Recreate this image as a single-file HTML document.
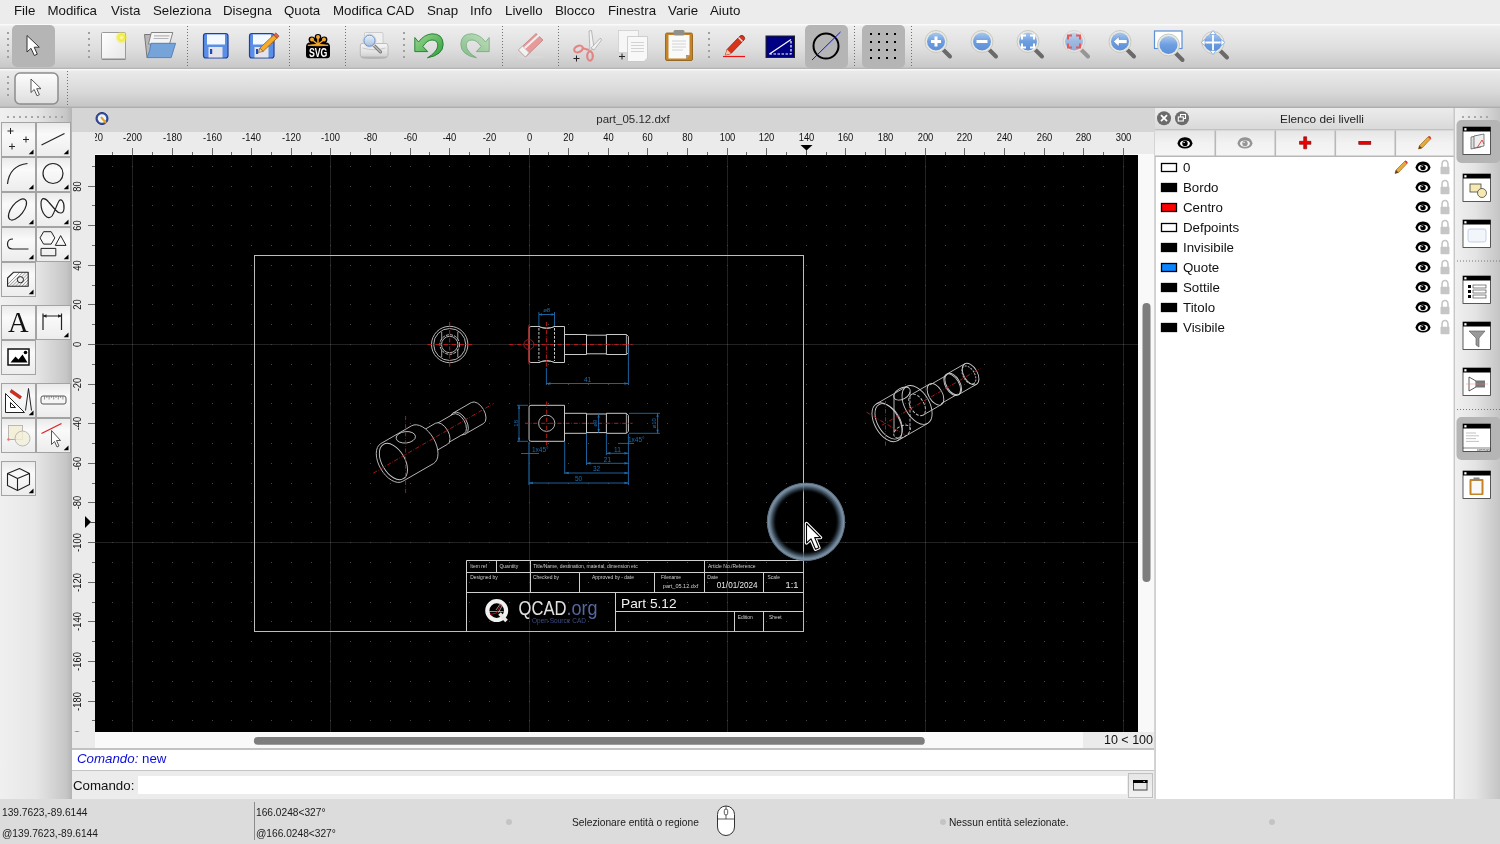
<!DOCTYPE html>
<html><head><meta charset="utf-8">
<style>
*{margin:0;padding:0;box-sizing:border-box}
html,body{width:1500px;height:844px;overflow:hidden;background:#ececec;will-change:transform;font-family:"Liberation Sans",sans-serif;color:#222;position:relative}
.a{position:absolute}
svg.a{overflow:visible}
#menubar{left:0;top:0;width:1500px;height:24px;background:#ececec}
#menubar span{position:absolute;top:2.8px;font-size:13.3px;color:#141414;white-space:nowrap}
#tb1{left:0;top:24px;width:1500px;height:45px;background:linear-gradient(#fafafa 0,#fafafa 1px,#eeeeee 2px,#dedede 55%,#c9c9c9 95%,#b0b0b0 100%)}
#tb2{left:0;top:69px;width:1500px;height:39px;background:linear-gradient(#f8f8f8 0,#f8f8f8 1px,#eaeaea 2px,#d8d8d8 60%,#c6c6c6 94%,#a8a8a8 100%)}
#toolbox{left:0;top:108px;width:72px;height:691px;background:linear-gradient(90deg,#f0f0f0 0,#e6e6e6 50%,#c6c6c6 92%,#b4b4b4 100%)}
#mdi{left:72px;top:108px;width:1083px;height:691px;background:#ececec}
#mdititle{left:72px;top:108px;width:1082px;height:24px;background:#d5d5d5}
#rulertop{left:72px;top:132px;width:1082px;height:23px;background:#ebebeb}
#rulerleft{left:72px;top:155px;width:23px;height:593px;background:#ebebeb}
#canvas{left:95px;top:155px;width:1043px;height:577px;background:#000}
#vscroll{left:1138px;top:155px;width:16px;height:593px;background:#f9f9f9}
#hscroll{left:95px;top:732px;width:1043px;height:16px;background:#f9f9f9}
#zoomlbl{left:1083px;top:732px;width:71px;height:16px;background:#ebebeb;font-size:12.5px;color:#111;text-align:right;line-height:16px;padding-right:1px}
#cmdhist{left:72px;top:748px;width:1082px;height:23px;background:#fff;border-top:2px solid #c2c2c2;border-bottom:1px solid #c4c4c4}
#cmdrow{left:72px;top:771px;width:1082px;height:28px;background:#ececec}
#cmdin{left:138px;top:776px;width:989px;height:18px;background:#fff}
#cmdbtn{left:1127.5px;top:772.5px;width:25px;height:25px;background:linear-gradient(#e6e6e6,#f2f2f2);border:1px solid #c0c0c0}
#status{left:0;top:799px;width:1500px;height:45px;background:#dcdcdc}
.st{position:absolute;font-size:10.2px;color:#1a1a1a;white-space:nowrap}
#layerbg{left:1154px;top:108px;width:301px;height:691px;background:#d4d4d4}
</style></head>
<body><div id="menubar" class="a">
<span style="left:14px">File</span>
<span style="left:47.5px">Modifica</span>
<span style="left:111px">Vista</span>
<span style="left:153px">Seleziona</span>
<span style="left:223px">Disegna</span>
<span style="left:284px">Quota</span>
<span style="left:333px">Modifica CAD</span>
<span style="left:427px">Snap</span>
<span style="left:470px">Info</span>
<span style="left:505px">Livello</span>
<span style="left:555px">Blocco</span>
<span style="left:608px">Finestra</span>
<span style="left:668px">Varie</span>
<span style="left:710px">Aiuto</span>
</div>
<div id="tb1" class="a"></div>
<div id="tb2" class="a"></div>
<div id="toolbox" class="a"></div>
<div id="mdi" class="a"></div>
<div id="mdititle" class="a"></div>
<div id="rulertop" class="a"></div>
<div id="rulerleft" class="a"></div>
<div id="canvas" class="a"></div>
<div id="vscroll" class="a"></div>
<div id="hscroll" class="a"></div>
<div id="zoomlbl" class="a">10 &lt; 100</div>
<div id="cmdhist" class="a"><span class="a" style="left:5px;top:0.5px;font-size:13.3px;color:#0e0ed8;white-space:nowrap"><i>Comando:</i> new</span></div>
<div id="cmdrow" class="a"><span class="a" style="left:1px;top:6.8px;font-size:13.3px;color:#111;white-space:nowrap">Comando:</span></div>
<div id="cmdin" class="a"></div>
<div id="cmdbtn" class="a"><svg class="a" style="left:4.5px;top:6.5px" width="15" height="11"><rect x="0.5" y="0.5" width="13.5" height="9.5" fill="#e8e8e8" stroke="#444" stroke-width="1"/><rect x="0" y="0" width="14.5" height="3" fill="#000"/><rect x="10.5" y="1" width="1.2" height="1" fill="#fff"/></svg></div>
<div id="status" class="a">
<span class="st" style="left:2px;top:8px">139.7623,-89.6144</span>
<span class="st" style="left:2px;top:28.8px">@139.7623,-89.6144</span>
<div class="a" style="left:254px;top:3px;width:1px;height:38px;background:#8c8c8c"></div>
<span class="st" style="left:256px;top:8px">166.0248&lt;327°</span>
<span class="st" style="left:256px;top:28.8px">@166.0248&lt;327°</span>
<div class="a" style="left:506px;top:19.5px;width:6px;height:6px;border-radius:3px;background:#c4c4c4"></div>
<span class="st" style="left:572px;top:18px">Selezionare entità o regione</span>
<svg class="a" style="left:716px;top:6px" width="21" height="32"><rect x="1.5" y="1" width="17" height="29.5" rx="8.5" fill="#fff" stroke="#333" stroke-width="1"/><path d="M1.5,14 H18.5" stroke="#333" stroke-width="0.8"/><path d="M10,1 V14" stroke="#333" stroke-width="0.8"/><rect x="8.3" y="4" width="3.4" height="6" rx="1.7" fill="#fff" stroke="#333" stroke-width="0.8"/></svg>
<div class="a" style="left:940px;top:19.5px;width:6px;height:6px;border-radius:3px;background:#c4c4c4"></div>
<span class="st" style="left:949px;top:18px">Nessun entità selezionate.</span>
<div class="a" style="left:1269px;top:19.5px;width:6px;height:6px;border-radius:3px;background:#c4c4c4"></div>
</div>
<div id="layerbg" class="a"></div>
<svg class="a" style="left:0;top:0" width="1500" height="110" viewBox="0 0 1500 110">
<defs>
<linearGradient id="gBlue" x1="0" y1="0" x2="0" y2="1"><stop offset="0" stop-color="#a9c8ef"/><stop offset="0.5" stop-color="#6d9ee0"/><stop offset="1" stop-color="#5b8fd8"/></linearGradient>
<linearGradient id="gBtn" x1="0" y1="0" x2="0" y2="1"><stop offset="0" stop-color="#fdfdfd"/><stop offset="1" stop-color="#dedede"/></linearGradient>
<linearGradient id="gPage" x1="0" y1="0" x2="1" y2="1"><stop offset="0" stop-color="#ffffff"/><stop offset="1" stop-color="#e6e6e6"/></linearGradient>
<radialGradient id="gGlow"><stop offset="0" stop-color="#ffffc0"/><stop offset="0.45" stop-color="#f2ea3a"/><stop offset="1" stop-color="#f2ea3a" stop-opacity="0"/></radialGradient>
<g id="mag">
 <path d="M7,8 L14,15" stroke="#6a6a6a" stroke-width="4" stroke-linecap="round"/>
 <circle cx="0" cy="0" r="11" fill="#e9e9e4" stroke="#c8c8c0" stroke-width="1"/>
 <circle cx="0" cy="0" r="9" fill="url(#gBlue)"/>
</g>
</defs>
<!-- toolbar handles -->
<g fill="#a0a0a0">
<rect x="7" y="32" width="2" height="2"/><rect x="7" y="38" width="2" height="2"/><rect x="7" y="44" width="2" height="2"/><rect x="7" y="50" width="2" height="2"/><rect x="7" y="56" width="2" height="2"/>
<rect x="88" y="32" width="2" height="2"/><rect x="88" y="38" width="2" height="2"/><rect x="88" y="44" width="2" height="2"/><rect x="88" y="50" width="2" height="2"/><rect x="88" y="56" width="2" height="2"/>
<rect x="403" y="32" width="2" height="2"/><rect x="403" y="38" width="2" height="2"/><rect x="403" y="44" width="2" height="2"/><rect x="403" y="50" width="2" height="2"/><rect x="403" y="56" width="2" height="2"/>
<rect x="708" y="32" width="2" height="2"/><rect x="708" y="38" width="2" height="2"/><rect x="708" y="44" width="2" height="2"/><rect x="708" y="50" width="2" height="2"/><rect x="708" y="56" width="2" height="2"/>
<rect x="7" y="76" width="2" height="2"/><rect x="7" y="82" width="2" height="2"/><rect x="7" y="88" width="2" height="2"/><rect x="7" y="94" width="2" height="2"/>
</g>
<g stroke="#707070" stroke-width="1" stroke-dasharray="1 2">
<line x1="187.5" y1="26" x2="187.5" y2="67"/><line x1="289.5" y1="26" x2="289.5" y2="67"/><line x1="345.5" y1="26" x2="345.5" y2="67"/>
<line x1="502.5" y1="26" x2="502.5" y2="67"/><line x1="558.5" y1="26" x2="558.5" y2="67"/><line x1="854.5" y1="26" x2="854.5" y2="67"/><line x1="911.5" y1="26" x2="911.5" y2="67"/>
<line x1="67.5" y1="71" x2="67.5" y2="106"/>
</g>
<!-- selected pointer -->
<rect x="12" y="25" width="43" height="42" rx="5" fill="#b5b5b5"/>
<path d="M27,35.5 L27,52 L31,48.3 L34.3,55.5 L37.3,54.2 L34.2,47.2 L39.3,47.2 Z" fill="#fff" stroke="#333" stroke-width="1" stroke-linejoin="round"/>
<!-- toolbar2 pointer button -->
<rect x="15" y="73" width="43" height="31" rx="5" fill="url(#gBtn)" stroke="#8c8c8c" stroke-width="1.5"/>
<path d="M31,79 L31,92.5 L34.2,89.5 L37,95.8 L39.4,94.7 L36.7,88.7 L41,88.7 Z" fill="#fff" stroke="#444" stroke-width="0.9" stroke-linejoin="round"/>
<!-- new doc -->
<rect x="101.5" y="32.5" width="24" height="27" rx="1" fill="url(#gPage)" stroke="#9a9a9a" stroke-width="1"/>
<rect x="102" y="58.5" width="23.5" height="1.5" fill="#8c8c8c"/>
<circle cx="121.5" cy="37.5" r="6.5" fill="url(#gGlow)"/>
<!-- open folder -->
<path d="M144.5,34.5 L151.5,34.5 L151,56.5 L147,57.5 Z" fill="#b8b8b8" stroke="#6e6e6e" stroke-width="0.9"/>
<path d="M151.3,32.5 L172.8,32.5 L169.5,44 L148.5,44 Z" fill="#f4f4f4" stroke="#777" stroke-width="0.9"/>
<path d="M154,35.8 h15.5 M153.5,38.5 h15" stroke="#b4b4b4" stroke-width="1.2"/>
<path d="M151,43.3 L175.6,43.3 L171.2,57.6 L147,57.6 Q150,52 151,43.3 Z" fill="#76a3d8" stroke="#4a7ec4" stroke-width="0.9"/>
<!-- save -->
<g id="floppy">
<rect x="203.5" y="33.5" width="24.5" height="24.5" rx="2.5" fill="#5b8fe6" stroke="#1f3fa0" stroke-width="1.2"/>
<rect x="207" y="34.5" width="18" height="10" fill="#f4f8ff"/>
<rect x="208.5" y="47" width="14" height="10.5" fill="#e3e3ea"/>
<rect x="210" y="49" width="2.2" height="5" fill="#1e49b8"/>
</g>
<use href="#floppy" x="46"/>
<polygon points="259.82,48.08 273.74,34.89 276.90,38.23 262.99,51.42" fill="#f4ac2a" stroke="#9a5a12" stroke-width="0.8"/><polygon points="273.74,34.89 275.92,32.83 279.08,36.17 276.90,38.23" fill="#e0604a" stroke="#9a3a22" stroke-width="0.6"/><polygon points="258.50,52.50 259.82,48.08 262.99,51.42" fill="#f0d0a0" stroke="#7a4a12" stroke-width="0.6"/>
<!-- SVG -->
<g fill="#000"><circle cx="318" cy="37.2" r="3.3"/><circle cx="311.8" cy="39.6" r="3.2"/><circle cx="324.2" cy="39.6" r="3.2"/><path d="M306,47 Q306,42.5 310,42.5 L326,42.5 Q330,42.5 330,47 L330,55 Q330,58.3 327,58.3 L309,58.3 Q306,58.3 306,55 Z"/><rect x="310" y="38" width="16" height="6"/></g>
<g fill="#f6a92c"><circle cx="318" cy="37" r="2"/><circle cx="312" cy="39.6" r="2"/><circle cx="324" cy="39.6" r="2"/></g>
<g stroke="#f6a92c" stroke-width="1.5" stroke-linecap="round"><line x1="318" y1="44.5" x2="318" y2="37.5"/><line x1="318" y1="44.5" x2="312.5" y2="40"/><line x1="318" y1="44.5" x2="323.5" y2="40"/></g>
<path d="M307.8,45.3 Q318,43.2 328.2,45.3 Q318,46.3 307.8,45.3 Z" fill="#f6a92c" stroke="#f6a92c" stroke-width="0.8"/>
<text x="318.2" y="56.8" text-anchor="middle" font-family="Liberation Sans" font-weight="bold" font-size="12.5" fill="#fff" textLength="18.5" lengthAdjust="spacingAndGlyphs">SVG</text>
<!-- print preview -->
<defs><linearGradient id="gPr" x1="0" y1="0" x2="0" y2="1"><stop offset="0" stop-color="#f6f6f6"/><stop offset="0.6" stop-color="#e4e4e4"/><stop offset="1" stop-color="#cfcfcf"/></linearGradient>
<linearGradient id="gLens" x1="0" y1="0" x2="0" y2="1"><stop offset="0" stop-color="#e8f0fa"/><stop offset="1" stop-color="#a9bfdc"/></linearGradient></defs>
<rect x="364.5" y="32.5" width="18.5" height="13" rx="1" fill="#f0f0f0" stroke="#c4c4c4" stroke-width="0.8"/>
<ellipse cx="374" cy="57.5" rx="13" ry="1.6" fill="#9a9a9a" opacity="0.5"/>
<path d="M362,43.5 L386,43.5 Q388,43.5 388,46 L388,55 Q388,57 386,57 L362,57 Q360.3,57 360.3,55 L360.3,46 Q360.3,43.5 362,43.5 Z" fill="url(#gPr)" stroke="#b0b0b0" stroke-width="0.8"/>
<path d="M362.5,48 Q374,51.5 385.5,48" fill="none" stroke="#c8c8c8" stroke-width="1"/>
<path d="M373.5,45 L380.5,51.8" stroke="#777" stroke-width="3.2" stroke-linecap="round"/>
<path d="M373.5,45 L380.5,51.8" stroke="#b8b8b8" stroke-width="1.4" stroke-linecap="round"/>
<circle cx="369.5" cy="40.7" r="6.6" fill="#fafafa" stroke="#cfcfcf" stroke-width="0.6"/>
<circle cx="369.5" cy="40.7" r="5.6" fill="url(#gLens)" stroke="#5b8fd0" stroke-width="1"/>
<!-- undo -->
<defs><linearGradient id="gUndo" x1="0" y1="0" x2="1" y2="1"><stop offset="0" stop-color="#9ad88e"/><stop offset="1" stop-color="#2e9e3e"/></linearGradient></defs>
<path d="M414.8,37.5 L418.5,42 Q424,34.5 432,33.8 Q443,33.5 443.2,44.5 Q443,55 427.5,57.8 Q437,52 437.8,46 Q438,40 432,40 Q427,40 422.9,46.5 L427.7,51.6 L414.8,51.6 Z" fill="url(#gUndo)" stroke="#1d7a2e" stroke-width="0.9" stroke-linejoin="round"/>
<g opacity="0.5"><path d="M414.8,37.5 L418.5,42 Q424,34.5 432,33.8 Q443,33.5 443.2,44.5 Q443,55 427.5,57.8 Q437,52 437.8,46 Q438,40 432,40 Q427,40 422.9,46.5 L427.7,51.6 L414.8,51.6 Z" transform="translate(904,0) scale(-1,1)" fill="url(#gUndo)" stroke="#1d7a2e" stroke-width="0.9" stroke-linejoin="round"/></g>
<!-- eraser -->
<ellipse cx="531" cy="57" rx="13" ry="1.6" fill="#d8d8d8"/>
<path d="M518.5,50 L536,33.5 L543,40 L525.5,57 Z" fill="#e79a9a" stroke="#b86a6a" stroke-width="0.6"/>
<path d="M522,46.5 L539.5,30.5" stroke="#f0f0f0" stroke-width="2.2" transform="translate(0,4)"/>
<path d="M518.5,50 L522.5,46 L529,52.5 L525.5,57 Z" fill="#f2f2f2" stroke="#aaa" stroke-width="0.6"/>
<!-- scissors -->
<g opacity="0.9">
<path d="M590,51 L589,31 L591.5,30.5 L594,48 Z" fill="#f4f4f4" stroke="#999" stroke-width="0.7"/>
<path d="M591,48 L600.5,38 L601.5,40 L594,50 Z" fill="#f4f4f4" stroke="#999" stroke-width="0.7"/>
<ellipse cx="578.5" cy="49" rx="4.5" ry="3" fill="none" stroke="#e67b7b" stroke-width="2.2" transform="rotate(-25 578.5 49)"/>
<ellipse cx="590" cy="56" rx="2.8" ry="4.6" fill="none" stroke="#e67b7b" stroke-width="2.2"/>
<path d="M582,48 L589,50" stroke="#e67b7b" stroke-width="2"/>
</g>
<path d="M573.5,58.5 h6 M576.5,55.5 v6" stroke="#222" stroke-width="1"/>
<!-- copy -->
<rect x="618.5" y="30.5" width="20" height="22" fill="#f6f6f6" stroke="#cfcfcf" stroke-width="0.8"/>
<path d="M627.5,36.5 L647.5,36.5 L647.5,58 L644,61.5 L627.5,61.5 Z" fill="#f8f8f8" stroke="#c4c4c4" stroke-width="0.8"/>
<g stroke="#c9c9c9" stroke-width="0.8"><line x1="631" y1="42.5" x2="644" y2="42.5"/><line x1="631" y1="45.5" x2="644" y2="45.5"/><line x1="631" y1="48.5" x2="644" y2="48.5"/><line x1="631" y1="51.5" x2="644" y2="51.5"/></g>
<path d="M619,56.5 h6 M622,53.5 v6" stroke="#222" stroke-width="1"/>
<!-- paste -->
<rect x="665.5" y="33" width="27" height="27.5" rx="1.5" fill="#c48426" stroke="#8a5810" stroke-width="0.8"/>
<path d="M668.5,35 L689.5,35 L689.5,55 L686,58.5 L668.5,58.5 Z" fill="#fafafa"/>
<path d="M686,58.5 L689.5,55 L686,55 Z" fill="#999"/>
<rect x="673.5" y="30" width="11" height="5.5" rx="1.5" fill="#8f918a"/>
<g stroke="#c9c9c9" stroke-width="0.8"><line x1="672" y1="41" x2="686" y2="41"/><line x1="672" y1="44" x2="686" y2="44"/><line x1="672" y1="47" x2="686" y2="47"/><line x1="672" y1="50" x2="683" y2="50"/></g>
<!-- pencil draw -->
<line x1="723" y1="56.5" x2="745" y2="56.5" stroke="#ee1111" stroke-width="1.2"/>
<path d="M725.5,55 L727,49.5 L740,36 Q742,34.5 744,36.5 Q745.5,38.5 744,40 L731,53.5 Z" fill="#d9331c" stroke="#7a2a10" stroke-width="0.8"/>
<path d="M725.5,55 L727,49.5 L731,53.5 Z" fill="#f0c8a0"/>
<path d="M738.5,37.5 L742.5,41.5" stroke="#e8e8e8" stroke-width="1.5"/>
<!-- blue rect -->
<rect x="766" y="36" width="28.5" height="21.5" fill="#000082" stroke="#222" stroke-width="1"/>
<path d="M769.5,54 L791,39.5" stroke="#fff" stroke-width="1.2"/>
<path d="M769.5,54 L791,54 L791,39.5" fill="none" stroke="#fff" stroke-width="1.2" stroke-dasharray="2.5 1.5"/>
<!-- selected circle btn -->
<rect x="805" y="25" width="43" height="43" rx="5" fill="#b5b5b5"/>
<circle cx="826" cy="46" r="12.5" fill="none" stroke="#000" stroke-width="2"/>
<line x1="812" y1="60" x2="840.5" y2="32" stroke="#1010ff" stroke-width="1"/>
<!-- selected grid -->
<rect x="862" y="25" width="43" height="43" rx="5" fill="#b5b5b5"/>
<g fill="#000">
<rect x="870" y="33" width="2" height="2"/><rect x="878" y="33" width="2" height="2"/><rect x="886" y="33" width="2" height="2"/><rect x="894" y="33" width="2" height="2"/>
<rect x="870" y="41" width="2" height="2"/><rect x="878" y="41" width="2" height="2"/><rect x="886" y="41" width="2" height="2"/><rect x="894" y="41" width="2" height="2"/>
<rect x="870" y="49" width="2" height="2"/><rect x="878" y="49" width="2" height="2"/><rect x="886" y="49" width="2" height="2"/><rect x="894" y="49" width="2" height="2"/>
<rect x="870" y="57" width="2" height="2"/><rect x="878" y="57" width="2" height="2"/><rect x="886" y="57" width="2" height="2"/><rect x="894" y="57" width="2" height="2"/>
</g>
<!-- magnifiers -->
<use href="#mag" x="936" y="41.5"/>
<path d="M931,41.5 h10 M936,36.5 v10" stroke="#fff" stroke-width="3"/>
<use href="#mag" x="982" y="41.5"/>
<path d="M976.5,41.5 h11" stroke="#fff" stroke-width="3"/>
<use href="#mag" x="1028" y="41.5"/>
<path d="M1022,39.5 v-4 h4 M1030,35.5 h4 v4 M1034,43.5 v4 h-4 M1026,47.5 h-4 v-4" fill="none" stroke="#fff" stroke-width="2"/>
<g opacity="0.6"><use href="#mag" x="1074" y="41.5"/></g>
<path d="M1068,39.5 v-4 h4 M1076,35.5 h4 v4 M1080,43.5 v4 h-4 M1072,47.5 h-4 v-4" fill="none" stroke="#ee5555" stroke-width="2"/>
<use href="#mag" x="1120" y="41.5"/>
<path d="M1113.5,41.5 L1119,36.5 L1119,39.5 L1127,39.5 L1127,43.5 L1119,43.5 L1119,46.5 Z" fill="#fff" stroke="#5a7ab0" stroke-width="0.5"/>
<rect x="1154.5" y="31" width="27.5" height="17.5" fill="#fff" stroke="#5b8fd8" stroke-width="1.2"/>
<use href="#mag" x="1168.5" y="45"/>
<use href="#mag" x="1213" y="42.5"/>
<path d="M1213,31 v23 M1201.5,42.5 h23" stroke="#fff" stroke-width="1.8"/>
<path d="M1213,30.5 l-3,4 h6 Z M1213,54.5 l-3,-4 h6 Z M1201,42.5 l4,-3 v6 Z M1225,42.5 l-4,-3 v6 Z" fill="#fff" stroke="#5b8fd8" stroke-width="0.6"/>
</svg>
<svg class="a" style="left:0;top:0" width="72" height="844" viewBox="0 0 72 844">
<defs><linearGradient id="gTB" x1="0" y1="0" x2="0" y2="1"><stop offset="0" stop-color="#e9e9e9"/><stop offset="0.35" stop-color="#fafafa"/><stop offset="1" stop-color="#ececec"/></linearGradient><g id="tri"><path d="M0,0.5 L-4.8,5.3 L0,5.3 Z" fill="#000"/></g></defs>
<g fill="#a6a6a6"><rect x="7" y="116" width="2" height="2"/><rect x="13" y="116" width="2" height="2"/><rect x="19" y="116" width="2" height="2"/><rect x="25" y="116" width="2" height="2"/><rect x="31" y="116" width="2" height="2"/><rect x="37" y="116" width="2" height="2"/><rect x="43" y="116" width="2" height="2"/><rect x="49" y="116" width="2" height="2"/><rect x="55" y="116" width="2" height="2"/><rect x="61" y="116" width="2" height="2"/></g>
<rect x="1.5" y="122.5" width="34" height="34" fill="url(#gTB)" stroke="#a3a3a3" stroke-width="1"/>
<use href="#tri" x="33.5" y="149.0"/>
<path d="M10.5,128.0v6M7.5,131.0h6M26.0,136.5v6M23.0,139.5h6M12.0,143.5v6M9.0,146.5h6" stroke="#222" stroke-width="1" fill="none"/>
<rect x="36.5" y="122.5" width="34" height="34" fill="url(#gTB)" stroke="#a3a3a3" stroke-width="1"/>
<use href="#tri" x="68.5" y="149.0"/>
<path d="M41.5,145.0L64.5,133.5" stroke="#222" stroke-width="1.2" fill="none"/>
<rect x="1.5" y="157.5" width="34" height="34" fill="url(#gTB)" stroke="#a3a3a3" stroke-width="1"/>
<use href="#tri" x="33.5" y="184.0"/>
<path d="M7.5,184.0Q9.5,165.5 27.5,163.5" stroke="#222" stroke-width="1.2" fill="none"/>
<rect x="36.5" y="157.5" width="34" height="34" fill="url(#gTB)" stroke="#a3a3a3" stroke-width="1"/>
<use href="#tri" x="68.5" y="184.0"/>
<circle cx="53.0" cy="173.5" r="10" stroke="#222" stroke-width="1.2" fill="none"/>
<rect x="1.5" y="192.5" width="34" height="34" fill="url(#gTB)" stroke="#a3a3a3" stroke-width="1"/>
<use href="#tri" x="33.5" y="219.0"/>
<ellipse cx="17.5" cy="209.5" rx="12.5" ry="6" transform="rotate(-52 17.5 209.5)" stroke="#222" stroke-width="1.2" fill="none"/>
<rect x="36.5" y="192.5" width="34" height="34" fill="url(#gTB)" stroke="#a3a3a3" stroke-width="1"/>
<use href="#tri" x="68.5" y="219.0"/>
<path transform="translate(36.5,192.5)" d="M4.5,11 C4.5,4 9,5.5 12.5,10 L19,17.5 C22,21 27,22.5 27.5,16 C28,9 24.5,5.5 22.5,8.5 C20.5,11.5 18,20 15.5,23.5 C11.5,28.5 4.5,21 4.5,11 Z" stroke="#222" stroke-width="1.2" fill="none"/>
<rect x="1.5" y="227.5" width="34" height="34" fill="url(#gTB)" stroke="#a3a3a3" stroke-width="1"/>
<use href="#tri" x="33.5" y="254.0"/>
<path d="M13.0,239.0Q7.5,239.0 7.5,244.0Q7.5,249.0 12.5,249.0H28.5" stroke="#222" stroke-width="1.2" fill="none"/>
<rect x="36.5" y="227.5" width="34" height="34" fill="url(#gTB)" stroke="#a3a3a3" stroke-width="1"/>
<use href="#tri" x="68.5" y="254.0"/>
<path transform="translate(36.5,227.5)" d="M3.5,10.4 l3.6,-6.2 h7.6 l3.6,6.2 l-3.6,6.2 h-7.6 z M18.8,17.9 l5.35,-9.8 l5.35,9.8 z M4.5,20.9 h14.8 v7.4 h-14.8 z" stroke="#222" stroke-width="1" fill="none" stroke-linejoin="round"/>
<rect x="1.5" y="262.5" width="34" height="34" fill="url(#gTB)" stroke="#a3a3a3" stroke-width="1"/>
<use href="#tri" x="33.5" y="289.0"/>
<defs><clipPath id="hclip"><path d="M7.6,278.0 L13.7,272.2 H28.2 V286.3 H7.6 Z"/></clipPath></defs>
<g clip-path="url(#hclip)"><path d="M3.5,288.5 l16,-16" stroke="#777" stroke-width="0.7"/><path d="M6.7,288.5 l16,-16" stroke="#777" stroke-width="0.7"/><path d="M9.9,288.5 l16,-16" stroke="#777" stroke-width="0.7"/><path d="M13.100000000000001,288.5 l16,-16" stroke="#777" stroke-width="0.7"/><path d="M16.3,288.5 l16,-16" stroke="#777" stroke-width="0.7"/><path d="M19.5,288.5 l16,-16" stroke="#777" stroke-width="0.7"/><path d="M22.700000000000003,288.5 l16,-16" stroke="#777" stroke-width="0.7"/><path d="M25.900000000000002,288.5 l16,-16" stroke="#777" stroke-width="0.7"/><path d="M29.1,288.5 l16,-16" stroke="#777" stroke-width="0.7"/></g>
<path d="M7.6,278.0 L13.7,272.2 H28.2 V286.3 H7.6 Z" fill="none" stroke="#222" stroke-width="1.1" stroke-linejoin="round"/>
<circle cx="20.4" cy="279.7" r="3.1" fill="#eee" stroke="#222" stroke-width="1"/>
<rect x="1.5" y="305.5" width="34" height="34" fill="url(#gTB)" stroke="#a3a3a3" stroke-width="1"/>
<text x="18.3" y="331.8" font-family="Liberation Serif" font-size="28.5" fill="#111" text-anchor="middle">A</text>
<rect x="36.5" y="305.5" width="34" height="34" fill="url(#gTB)" stroke="#a3a3a3" stroke-width="1"/>
<use href="#tri" x="68.5" y="332.0"/>
<path d="M43.0,313.5v16.5M61.5,313.5v16.5M43.0,316.0h18.5" stroke="#222" stroke-width="1.2" fill="none"/>
<path d="M43.0,316.0l3.5,-1.8v3.6zM61.5,316.0l-3.5,-1.8v3.6z" fill="#222"/>
<rect x="1.5" y="340.5" width="34" height="34" fill="url(#gTB)" stroke="#a3a3a3" stroke-width="1"/>
<rect x="8.0" y="349.0" width="21" height="16" fill="#fff" stroke="#111" stroke-width="1.5"/>
<path d="M10.5,362.5l5,-6l3,3l4,-5l5,8z" fill="#000"/><circle cx="25.5" cy="352.5" r="1.8" fill="#000"/>
<rect x="1.5" y="383.5" width="34" height="34" fill="url(#gTB)" stroke="#a3a3a3" stroke-width="1"/>
<use href="#tri" x="33.5" y="410.0"/>
<path d="M5.5,412.5V393.5L24.5,412.5Z M10.5,407.5v-5l5,5z" fill="#fff" stroke="#222" stroke-width="1"/>
<path d="M11.5,389.5l10,7l-1.5,2.5l-10,-7z" fill="#dd2a1a" stroke="#6a1a10" stroke-width="0.5"/>
<path d="M28.5,388.5l-3,22M28.5,388.5l3,22" stroke="#222" stroke-width="1"/>
<rect x="36.5" y="383.5" width="34" height="34" fill="url(#gTB)" stroke="#a3a3a3" stroke-width="1"/>
<rect x="41.0" y="396.0" width="25" height="8" rx="2" fill="#f6f6f6" stroke="#555" stroke-width="1"/>
<path d="M44.5,396.0v3.5" stroke="#555" stroke-width="0.6"/>
<path d="M46.8,396.0v2" stroke="#555" stroke-width="0.6"/>
<path d="M49.1,396.0v3.5" stroke="#555" stroke-width="0.6"/>
<path d="M51.4,396.0v2" stroke="#555" stroke-width="0.6"/>
<path d="M53.7,396.0v3.5" stroke="#555" stroke-width="0.6"/>
<path d="M56.0,396.0v2" stroke="#555" stroke-width="0.6"/>
<path d="M58.3,396.0v3.5" stroke="#555" stroke-width="0.6"/>
<path d="M60.599999999999994,396.0v2" stroke="#555" stroke-width="0.6"/>
<path d="M62.9,396.0v3.5" stroke="#555" stroke-width="0.6"/>
<rect x="1.5" y="418.5" width="34" height="34" fill="url(#gTB)" stroke="#a3a3a3" stroke-width="1"/>
<rect x="8.5" y="425.5" width="14" height="14" fill="#f3efd8" stroke="#aaa" stroke-width="0.8"/>
<circle cx="22.5" cy="438.5" r="7.5" fill="#f3efd8" fill-opacity="0.8" stroke="#aaa" stroke-width="0.8"/>
<circle cx="8.5" cy="439.5" r="1.2" fill="#e66"/><path d="M8.5,439.5h5" stroke="#e88" stroke-width="0.8"/>
<rect x="36.5" y="418.5" width="34" height="34" fill="url(#gTB)" stroke="#a3a3a3" stroke-width="1"/>
<use href="#tri" x="68.5" y="445.0"/>
<path d="M41.5,433.5L61.5,423.5" stroke="#e02020" stroke-width="1.3"/>
<path d="M51.5,430.5v14l3,-3l2.5,5.5l2,-1l-2.5,-5.5h4z" fill="#fff" stroke="#444" stroke-width="0.9" stroke-linejoin="round"/>
<rect x="1.5" y="461.5" width="34" height="34" fill="url(#gTB)" stroke="#a3a3a3" stroke-width="1"/>
<use href="#tri" x="33.5" y="488.0"/>
<path d="M7.5,473.5l12,-5l10,5v11l-12,6l-10,-5z M7.5,473.5l10,5l12,-5 M17.5,478.5v12" stroke="#222" stroke-width="1.1" fill="none" stroke-linejoin="round"/>
</svg><svg class="a" style="left:0;top:0" width="1500" height="844" viewBox="0 0 1500 844">
<defs><clipPath id="rt"><rect x="95" y="132" width="1043" height="23"/></clipPath><clipPath id="rl"><rect x="72" y="155" width="23" height="577"/></clipPath></defs>
<circle cx="102" cy="118.5" r="6" fill="#3355aa" stroke="#223377" stroke-width="1"/>
<circle cx="102" cy="118.5" r="4.2" fill="#f4f4f4"/>
<path d="M101,117 L106,123" stroke="#e8a020" stroke-width="2"/>
<text x="633" y="123" font-family="Liberation Sans" font-size="11.5" fill="#2a2a2a" text-anchor="middle">part_05.12.dxf</text>
<rect x="95" y="154" width="1059" height="1" fill="#fafafa"/>
<g clip-path="url(#rt)">
<path d="M73.5,152V155M93.5,148V155M112.5,152V155M132.5,148V155M152.5,152V155M172.5,148V155M192.5,152V155M212.5,148V155M231.5,152V155M251.5,148V155M271.5,152V155M291.5,148V155M311.5,152V155M330.5,148V155M350.5,152V155M370.5,148V155M390.5,152V155M410.5,148V155M429.5,152V155M449.5,148V155M469.5,152V155M489.5,148V155M509.5,152V155M529.5,148V155M548.5,152V155M568.5,148V155M588.5,152V155M608.5,148V155M628.5,152V155M647.5,148V155M667.5,152V155M687.5,148V155M707.5,152V155M727.5,148V155M746.5,152V155M766.5,148V155M786.5,152V155M806.5,148V155M826.5,152V155M845.5,148V155M865.5,152V155M885.5,148V155M905.5,152V155M925.5,148V155M945.5,152V155M964.5,148V155M984.5,152V155M1004.5,148V155M1024.5,152V155M1044.5,148V155M1063.5,152V155M1083.5,148V155M1103.5,152V155M1123.5,148V155M1143.5,152V155" stroke="#6a6a6a" stroke-width="1"/>
<text transform="translate(93.5,141) scale(0.93,1)" font-family="Liberation Sans" font-size="10.1" fill="#111" text-anchor="middle">-220</text>
<text transform="translate(132.5,141) scale(0.93,1)" font-family="Liberation Sans" font-size="10.1" fill="#111" text-anchor="middle">-200</text>
<text transform="translate(172.5,141) scale(0.93,1)" font-family="Liberation Sans" font-size="10.1" fill="#111" text-anchor="middle">-180</text>
<text transform="translate(212.5,141) scale(0.93,1)" font-family="Liberation Sans" font-size="10.1" fill="#111" text-anchor="middle">-160</text>
<text transform="translate(251.5,141) scale(0.93,1)" font-family="Liberation Sans" font-size="10.1" fill="#111" text-anchor="middle">-140</text>
<text transform="translate(291.5,141) scale(0.93,1)" font-family="Liberation Sans" font-size="10.1" fill="#111" text-anchor="middle">-120</text>
<text transform="translate(330.5,141) scale(0.93,1)" font-family="Liberation Sans" font-size="10.1" fill="#111" text-anchor="middle">-100</text>
<text transform="translate(370.5,141) scale(0.93,1)" font-family="Liberation Sans" font-size="10.1" fill="#111" text-anchor="middle">-80</text>
<text transform="translate(410.5,141) scale(0.93,1)" font-family="Liberation Sans" font-size="10.1" fill="#111" text-anchor="middle">-60</text>
<text transform="translate(449.5,141) scale(0.93,1)" font-family="Liberation Sans" font-size="10.1" fill="#111" text-anchor="middle">-40</text>
<text transform="translate(489.5,141) scale(0.93,1)" font-family="Liberation Sans" font-size="10.1" fill="#111" text-anchor="middle">-20</text>
<text transform="translate(529.5,141) scale(0.93,1)" font-family="Liberation Sans" font-size="10.1" fill="#111" text-anchor="middle">0</text>
<text transform="translate(568.5,141) scale(0.93,1)" font-family="Liberation Sans" font-size="10.1" fill="#111" text-anchor="middle">20</text>
<text transform="translate(608.5,141) scale(0.93,1)" font-family="Liberation Sans" font-size="10.1" fill="#111" text-anchor="middle">40</text>
<text transform="translate(647.5,141) scale(0.93,1)" font-family="Liberation Sans" font-size="10.1" fill="#111" text-anchor="middle">60</text>
<text transform="translate(687.5,141) scale(0.93,1)" font-family="Liberation Sans" font-size="10.1" fill="#111" text-anchor="middle">80</text>
<text transform="translate(727.5,141) scale(0.93,1)" font-family="Liberation Sans" font-size="10.1" fill="#111" text-anchor="middle">100</text>
<text transform="translate(766.5,141) scale(0.93,1)" font-family="Liberation Sans" font-size="10.1" fill="#111" text-anchor="middle">120</text>
<text transform="translate(806.5,141) scale(0.93,1)" font-family="Liberation Sans" font-size="10.1" fill="#111" text-anchor="middle">140</text>
<text transform="translate(845.5,141) scale(0.93,1)" font-family="Liberation Sans" font-size="10.1" fill="#111" text-anchor="middle">160</text>
<text transform="translate(885.5,141) scale(0.93,1)" font-family="Liberation Sans" font-size="10.1" fill="#111" text-anchor="middle">180</text>
<text transform="translate(925.5,141) scale(0.93,1)" font-family="Liberation Sans" font-size="10.1" fill="#111" text-anchor="middle">200</text>
<text transform="translate(964.5,141) scale(0.93,1)" font-family="Liberation Sans" font-size="10.1" fill="#111" text-anchor="middle">220</text>
<text transform="translate(1004.5,141) scale(0.93,1)" font-family="Liberation Sans" font-size="10.1" fill="#111" text-anchor="middle">240</text>
<text transform="translate(1044.5,141) scale(0.93,1)" font-family="Liberation Sans" font-size="10.1" fill="#111" text-anchor="middle">260</text>
<text transform="translate(1083.5,141) scale(0.93,1)" font-family="Liberation Sans" font-size="10.1" fill="#111" text-anchor="middle">280</text>
<text transform="translate(1123.5,141) scale(0.93,1)" font-family="Liberation Sans" font-size="10.1" fill="#111" text-anchor="middle">300</text>
</g>
<path d="M800.5,145 L812.5,145 L806.5,150.5 Z" fill="#000"/><path d="M806.5,150V155" stroke="#555"/>
<g clip-path="url(#rl)">
<path d="M88,740.5H95M92,720.5H95M88,701.5H95M92,681.5H95M88,661.5H95M92,641.5H95M88,621.5H95M92,602.5H95M88,582.5H95M92,562.5H95M88,542.5H95M92,522.5H95M88,502.5H95M92,483.5H95M88,463.5H95M92,443.5H95M88,423.5H95M92,403.5H95M88,384.5H95M92,364.5H95M88,344.5H95M92,324.5H95M88,304.5H95M92,285.5H95M88,265.5H95M92,245.5H95M88,225.5H95M92,205.5H95M88,186.5H95M92,166.5H95" stroke="#6a6a6a" stroke-width="1"/>
<text transform="translate(81.2,740.5) rotate(-90) scale(0.93,1)" font-family="Liberation Sans" font-size="10.1" fill="#111" text-anchor="middle">-200</text>
<text transform="translate(81.2,701.5) rotate(-90) scale(0.93,1)" font-family="Liberation Sans" font-size="10.1" fill="#111" text-anchor="middle">-180</text>
<text transform="translate(81.2,661.5) rotate(-90) scale(0.93,1)" font-family="Liberation Sans" font-size="10.1" fill="#111" text-anchor="middle">-160</text>
<text transform="translate(81.2,621.5) rotate(-90) scale(0.93,1)" font-family="Liberation Sans" font-size="10.1" fill="#111" text-anchor="middle">-140</text>
<text transform="translate(81.2,582.5) rotate(-90) scale(0.93,1)" font-family="Liberation Sans" font-size="10.1" fill="#111" text-anchor="middle">-120</text>
<text transform="translate(81.2,542.5) rotate(-90) scale(0.93,1)" font-family="Liberation Sans" font-size="10.1" fill="#111" text-anchor="middle">-100</text>
<text transform="translate(81.2,502.5) rotate(-90) scale(0.93,1)" font-family="Liberation Sans" font-size="10.1" fill="#111" text-anchor="middle">-80</text>
<text transform="translate(81.2,463.5) rotate(-90) scale(0.93,1)" font-family="Liberation Sans" font-size="10.1" fill="#111" text-anchor="middle">-60</text>
<text transform="translate(81.2,423.5) rotate(-90) scale(0.93,1)" font-family="Liberation Sans" font-size="10.1" fill="#111" text-anchor="middle">-40</text>
<text transform="translate(81.2,384.5) rotate(-90) scale(0.93,1)" font-family="Liberation Sans" font-size="10.1" fill="#111" text-anchor="middle">-20</text>
<text transform="translate(81.2,344.5) rotate(-90) scale(0.93,1)" font-family="Liberation Sans" font-size="10.1" fill="#111" text-anchor="middle">0</text>
<text transform="translate(81.2,304.5) rotate(-90) scale(0.93,1)" font-family="Liberation Sans" font-size="10.1" fill="#111" text-anchor="middle">20</text>
<text transform="translate(81.2,265.5) rotate(-90) scale(0.93,1)" font-family="Liberation Sans" font-size="10.1" fill="#111" text-anchor="middle">40</text>
<text transform="translate(81.2,225.5) rotate(-90) scale(0.93,1)" font-family="Liberation Sans" font-size="10.1" fill="#111" text-anchor="middle">60</text>
<text transform="translate(81.2,186.5) rotate(-90) scale(0.93,1)" font-family="Liberation Sans" font-size="10.1" fill="#111" text-anchor="middle">80</text>
</g>
<path d="M85,516 L91,522 L85,528 Z" fill="#000"/><path d="M90,522.5H95" stroke="#555"/>
<rect x="1142.5" y="303" width="8" height="279" rx="4" fill="#7d7d7d"/>
<rect x="253.8" y="737" width="671" height="7.8" rx="3.9" fill="#7d7d7d"/>
</svg><svg class="a" style="left:0;top:0;pointer-events:none" width="1500" height="844" viewBox="0 0 1500 844">
<defs><clipPath id="cc"><rect x="95" y="155" width="1043" height="577"/></clipPath><radialGradient id="ring" cx="0.5" cy="0.5" r="0.5"><stop offset="0.74" stop-color="#000" stop-opacity="0"/><stop offset="0.82" stop-color="#2c3a46" stop-opacity="0.7"/><stop offset="0.9" stop-color="#687e92" stop-opacity="0.9"/><stop offset="0.95" stop-color="#7d93a7"/><stop offset="0.985" stop-color="#6a7e90" stop-opacity="0.8"/><stop offset="1" stop-color="#3a4a58" stop-opacity="0.3"/></radialGradient></defs>
<g clip-path="url(#cc)">
<path d="M132.5,155V732M330.5,155V732M529.5,155V732M727.5,155V732M925.5,155V732M1123.5,155V732M95,344.5H1138M95,542.5H1138" stroke="#222" stroke-width="1" fill="none"/>
<path d="M112,720h1v1h-1zM112,701h1v1h-1zM112,681h1v1h-1zM112,661h1v1h-1zM112,641h1v1h-1zM112,621h1v1h-1zM112,602h1v1h-1zM112,582h1v1h-1zM112,562h1v1h-1zM112,542h1v1h-1zM112,522h1v1h-1zM112,502h1v1h-1zM112,483h1v1h-1zM112,463h1v1h-1zM112,443h1v1h-1zM112,423h1v1h-1zM112,403h1v1h-1zM112,384h1v1h-1zM112,364h1v1h-1zM112,344h1v1h-1zM112,324h1v1h-1zM112,304h1v1h-1zM112,285h1v1h-1zM112,265h1v1h-1zM112,245h1v1h-1zM112,225h1v1h-1zM112,205h1v1h-1zM112,186h1v1h-1zM112,166h1v1h-1zM132,720h1v1h-1zM132,701h1v1h-1zM132,681h1v1h-1zM132,661h1v1h-1zM132,641h1v1h-1zM132,621h1v1h-1zM132,602h1v1h-1zM132,582h1v1h-1zM132,562h1v1h-1zM132,542h1v1h-1zM132,522h1v1h-1zM132,502h1v1h-1zM132,483h1v1h-1zM132,463h1v1h-1zM132,443h1v1h-1zM132,423h1v1h-1zM132,403h1v1h-1zM132,384h1v1h-1zM132,364h1v1h-1zM132,344h1v1h-1zM132,324h1v1h-1zM132,304h1v1h-1zM132,285h1v1h-1zM132,265h1v1h-1zM132,245h1v1h-1zM132,225h1v1h-1zM132,205h1v1h-1zM132,186h1v1h-1zM132,166h1v1h-1zM152,720h1v1h-1zM152,701h1v1h-1zM152,681h1v1h-1zM152,661h1v1h-1zM152,641h1v1h-1zM152,621h1v1h-1zM152,602h1v1h-1zM152,582h1v1h-1zM152,562h1v1h-1zM152,542h1v1h-1zM152,522h1v1h-1zM152,502h1v1h-1zM152,483h1v1h-1zM152,463h1v1h-1zM152,443h1v1h-1zM152,423h1v1h-1zM152,403h1v1h-1zM152,384h1v1h-1zM152,364h1v1h-1zM152,344h1v1h-1zM152,324h1v1h-1zM152,304h1v1h-1zM152,285h1v1h-1zM152,265h1v1h-1zM152,245h1v1h-1zM152,225h1v1h-1zM152,205h1v1h-1zM152,186h1v1h-1zM152,166h1v1h-1zM172,720h1v1h-1zM172,701h1v1h-1zM172,681h1v1h-1zM172,661h1v1h-1zM172,641h1v1h-1zM172,621h1v1h-1zM172,602h1v1h-1zM172,582h1v1h-1zM172,562h1v1h-1zM172,542h1v1h-1zM172,522h1v1h-1zM172,502h1v1h-1zM172,483h1v1h-1zM172,463h1v1h-1zM172,443h1v1h-1zM172,423h1v1h-1zM172,403h1v1h-1zM172,384h1v1h-1zM172,364h1v1h-1zM172,344h1v1h-1zM172,324h1v1h-1zM172,304h1v1h-1zM172,285h1v1h-1zM172,265h1v1h-1zM172,245h1v1h-1zM172,225h1v1h-1zM172,205h1v1h-1zM172,186h1v1h-1zM172,166h1v1h-1zM192,720h1v1h-1zM192,701h1v1h-1zM192,681h1v1h-1zM192,661h1v1h-1zM192,641h1v1h-1zM192,621h1v1h-1zM192,602h1v1h-1zM192,582h1v1h-1zM192,562h1v1h-1zM192,542h1v1h-1zM192,522h1v1h-1zM192,502h1v1h-1zM192,483h1v1h-1zM192,463h1v1h-1zM192,443h1v1h-1zM192,423h1v1h-1zM192,403h1v1h-1zM192,384h1v1h-1zM192,364h1v1h-1zM192,344h1v1h-1zM192,324h1v1h-1zM192,304h1v1h-1zM192,285h1v1h-1zM192,265h1v1h-1zM192,245h1v1h-1zM192,225h1v1h-1zM192,205h1v1h-1zM192,186h1v1h-1zM192,166h1v1h-1zM212,720h1v1h-1zM212,701h1v1h-1zM212,681h1v1h-1zM212,661h1v1h-1zM212,641h1v1h-1zM212,621h1v1h-1zM212,602h1v1h-1zM212,582h1v1h-1zM212,562h1v1h-1zM212,542h1v1h-1zM212,522h1v1h-1zM212,502h1v1h-1zM212,483h1v1h-1zM212,463h1v1h-1zM212,443h1v1h-1zM212,423h1v1h-1zM212,403h1v1h-1zM212,384h1v1h-1zM212,364h1v1h-1zM212,344h1v1h-1zM212,324h1v1h-1zM212,304h1v1h-1zM212,285h1v1h-1zM212,265h1v1h-1zM212,245h1v1h-1zM212,225h1v1h-1zM212,205h1v1h-1zM212,186h1v1h-1zM212,166h1v1h-1zM231,720h1v1h-1zM231,701h1v1h-1zM231,681h1v1h-1zM231,661h1v1h-1zM231,641h1v1h-1zM231,621h1v1h-1zM231,602h1v1h-1zM231,582h1v1h-1zM231,562h1v1h-1zM231,542h1v1h-1zM231,522h1v1h-1zM231,502h1v1h-1zM231,483h1v1h-1zM231,463h1v1h-1zM231,443h1v1h-1zM231,423h1v1h-1zM231,403h1v1h-1zM231,384h1v1h-1zM231,364h1v1h-1zM231,344h1v1h-1zM231,324h1v1h-1zM231,304h1v1h-1zM231,285h1v1h-1zM231,265h1v1h-1zM231,245h1v1h-1zM231,225h1v1h-1zM231,205h1v1h-1zM231,186h1v1h-1zM231,166h1v1h-1zM251,720h1v1h-1zM251,701h1v1h-1zM251,681h1v1h-1zM251,661h1v1h-1zM251,641h1v1h-1zM251,621h1v1h-1zM251,602h1v1h-1zM251,582h1v1h-1zM251,562h1v1h-1zM251,542h1v1h-1zM251,522h1v1h-1zM251,502h1v1h-1zM251,483h1v1h-1zM251,463h1v1h-1zM251,443h1v1h-1zM251,423h1v1h-1zM251,403h1v1h-1zM251,384h1v1h-1zM251,364h1v1h-1zM251,344h1v1h-1zM251,324h1v1h-1zM251,304h1v1h-1zM251,285h1v1h-1zM251,265h1v1h-1zM251,245h1v1h-1zM251,225h1v1h-1zM251,205h1v1h-1zM251,186h1v1h-1zM251,166h1v1h-1zM271,720h1v1h-1zM271,701h1v1h-1zM271,681h1v1h-1zM271,661h1v1h-1zM271,641h1v1h-1zM271,621h1v1h-1zM271,602h1v1h-1zM271,582h1v1h-1zM271,562h1v1h-1zM271,542h1v1h-1zM271,522h1v1h-1zM271,502h1v1h-1zM271,483h1v1h-1zM271,463h1v1h-1zM271,443h1v1h-1zM271,423h1v1h-1zM271,403h1v1h-1zM271,384h1v1h-1zM271,364h1v1h-1zM271,344h1v1h-1zM271,324h1v1h-1zM271,304h1v1h-1zM271,285h1v1h-1zM271,265h1v1h-1zM271,245h1v1h-1zM271,225h1v1h-1zM271,205h1v1h-1zM271,186h1v1h-1zM271,166h1v1h-1zM291,720h1v1h-1zM291,701h1v1h-1zM291,681h1v1h-1zM291,661h1v1h-1zM291,641h1v1h-1zM291,621h1v1h-1zM291,602h1v1h-1zM291,582h1v1h-1zM291,562h1v1h-1zM291,542h1v1h-1zM291,522h1v1h-1zM291,502h1v1h-1zM291,483h1v1h-1zM291,463h1v1h-1zM291,443h1v1h-1zM291,423h1v1h-1zM291,403h1v1h-1zM291,384h1v1h-1zM291,364h1v1h-1zM291,344h1v1h-1zM291,324h1v1h-1zM291,304h1v1h-1zM291,285h1v1h-1zM291,265h1v1h-1zM291,245h1v1h-1zM291,225h1v1h-1zM291,205h1v1h-1zM291,186h1v1h-1zM291,166h1v1h-1zM311,720h1v1h-1zM311,701h1v1h-1zM311,681h1v1h-1zM311,661h1v1h-1zM311,641h1v1h-1zM311,621h1v1h-1zM311,602h1v1h-1zM311,582h1v1h-1zM311,562h1v1h-1zM311,542h1v1h-1zM311,522h1v1h-1zM311,502h1v1h-1zM311,483h1v1h-1zM311,463h1v1h-1zM311,443h1v1h-1zM311,423h1v1h-1zM311,403h1v1h-1zM311,384h1v1h-1zM311,364h1v1h-1zM311,344h1v1h-1zM311,324h1v1h-1zM311,304h1v1h-1zM311,285h1v1h-1zM311,265h1v1h-1zM311,245h1v1h-1zM311,225h1v1h-1zM311,205h1v1h-1zM311,186h1v1h-1zM311,166h1v1h-1zM330,720h1v1h-1zM330,701h1v1h-1zM330,681h1v1h-1zM330,661h1v1h-1zM330,641h1v1h-1zM330,621h1v1h-1zM330,602h1v1h-1zM330,582h1v1h-1zM330,562h1v1h-1zM330,542h1v1h-1zM330,522h1v1h-1zM330,502h1v1h-1zM330,483h1v1h-1zM330,463h1v1h-1zM330,443h1v1h-1zM330,423h1v1h-1zM330,403h1v1h-1zM330,384h1v1h-1zM330,364h1v1h-1zM330,344h1v1h-1zM330,324h1v1h-1zM330,304h1v1h-1zM330,285h1v1h-1zM330,265h1v1h-1zM330,245h1v1h-1zM330,225h1v1h-1zM330,205h1v1h-1zM330,186h1v1h-1zM330,166h1v1h-1zM350,720h1v1h-1zM350,701h1v1h-1zM350,681h1v1h-1zM350,661h1v1h-1zM350,641h1v1h-1zM350,621h1v1h-1zM350,602h1v1h-1zM350,582h1v1h-1zM350,562h1v1h-1zM350,542h1v1h-1zM350,522h1v1h-1zM350,502h1v1h-1zM350,483h1v1h-1zM350,463h1v1h-1zM350,443h1v1h-1zM350,423h1v1h-1zM350,403h1v1h-1zM350,384h1v1h-1zM350,364h1v1h-1zM350,344h1v1h-1zM350,324h1v1h-1zM350,304h1v1h-1zM350,285h1v1h-1zM350,265h1v1h-1zM350,245h1v1h-1zM350,225h1v1h-1zM350,205h1v1h-1zM350,186h1v1h-1zM350,166h1v1h-1zM370,720h1v1h-1zM370,701h1v1h-1zM370,681h1v1h-1zM370,661h1v1h-1zM370,641h1v1h-1zM370,621h1v1h-1zM370,602h1v1h-1zM370,582h1v1h-1zM370,562h1v1h-1zM370,542h1v1h-1zM370,522h1v1h-1zM370,502h1v1h-1zM370,483h1v1h-1zM370,463h1v1h-1zM370,443h1v1h-1zM370,423h1v1h-1zM370,403h1v1h-1zM370,384h1v1h-1zM370,364h1v1h-1zM370,344h1v1h-1zM370,324h1v1h-1zM370,304h1v1h-1zM370,285h1v1h-1zM370,265h1v1h-1zM370,245h1v1h-1zM370,225h1v1h-1zM370,205h1v1h-1zM370,186h1v1h-1zM370,166h1v1h-1zM390,720h1v1h-1zM390,701h1v1h-1zM390,681h1v1h-1zM390,661h1v1h-1zM390,641h1v1h-1zM390,621h1v1h-1zM390,602h1v1h-1zM390,582h1v1h-1zM390,562h1v1h-1zM390,542h1v1h-1zM390,522h1v1h-1zM390,502h1v1h-1zM390,483h1v1h-1zM390,463h1v1h-1zM390,443h1v1h-1zM390,423h1v1h-1zM390,403h1v1h-1zM390,384h1v1h-1zM390,364h1v1h-1zM390,344h1v1h-1zM390,324h1v1h-1zM390,304h1v1h-1zM390,285h1v1h-1zM390,265h1v1h-1zM390,245h1v1h-1zM390,225h1v1h-1zM390,205h1v1h-1zM390,186h1v1h-1zM390,166h1v1h-1zM410,720h1v1h-1zM410,701h1v1h-1zM410,681h1v1h-1zM410,661h1v1h-1zM410,641h1v1h-1zM410,621h1v1h-1zM410,602h1v1h-1zM410,582h1v1h-1zM410,562h1v1h-1zM410,542h1v1h-1zM410,522h1v1h-1zM410,502h1v1h-1zM410,483h1v1h-1zM410,463h1v1h-1zM410,443h1v1h-1zM410,423h1v1h-1zM410,403h1v1h-1zM410,384h1v1h-1zM410,364h1v1h-1zM410,344h1v1h-1zM410,324h1v1h-1zM410,304h1v1h-1zM410,285h1v1h-1zM410,265h1v1h-1zM410,245h1v1h-1zM410,225h1v1h-1zM410,205h1v1h-1zM410,186h1v1h-1zM410,166h1v1h-1zM429,720h1v1h-1zM429,701h1v1h-1zM429,681h1v1h-1zM429,661h1v1h-1zM429,641h1v1h-1zM429,621h1v1h-1zM429,602h1v1h-1zM429,582h1v1h-1zM429,562h1v1h-1zM429,542h1v1h-1zM429,522h1v1h-1zM429,502h1v1h-1zM429,483h1v1h-1zM429,463h1v1h-1zM429,443h1v1h-1zM429,423h1v1h-1zM429,403h1v1h-1zM429,384h1v1h-1zM429,364h1v1h-1zM429,344h1v1h-1zM429,324h1v1h-1zM429,304h1v1h-1zM429,285h1v1h-1zM429,265h1v1h-1zM429,245h1v1h-1zM429,225h1v1h-1zM429,205h1v1h-1zM429,186h1v1h-1zM429,166h1v1h-1zM449,720h1v1h-1zM449,701h1v1h-1zM449,681h1v1h-1zM449,661h1v1h-1zM449,641h1v1h-1zM449,621h1v1h-1zM449,602h1v1h-1zM449,582h1v1h-1zM449,562h1v1h-1zM449,542h1v1h-1zM449,522h1v1h-1zM449,502h1v1h-1zM449,483h1v1h-1zM449,463h1v1h-1zM449,443h1v1h-1zM449,423h1v1h-1zM449,403h1v1h-1zM449,384h1v1h-1zM449,364h1v1h-1zM449,344h1v1h-1zM449,324h1v1h-1zM449,304h1v1h-1zM449,285h1v1h-1zM449,265h1v1h-1zM449,245h1v1h-1zM449,225h1v1h-1zM449,205h1v1h-1zM449,186h1v1h-1zM449,166h1v1h-1zM469,720h1v1h-1zM469,701h1v1h-1zM469,681h1v1h-1zM469,661h1v1h-1zM469,641h1v1h-1zM469,621h1v1h-1zM469,602h1v1h-1zM469,582h1v1h-1zM469,562h1v1h-1zM469,542h1v1h-1zM469,522h1v1h-1zM469,502h1v1h-1zM469,483h1v1h-1zM469,463h1v1h-1zM469,443h1v1h-1zM469,423h1v1h-1zM469,403h1v1h-1zM469,384h1v1h-1zM469,364h1v1h-1zM469,344h1v1h-1zM469,324h1v1h-1zM469,304h1v1h-1zM469,285h1v1h-1zM469,265h1v1h-1zM469,245h1v1h-1zM469,225h1v1h-1zM469,205h1v1h-1zM469,186h1v1h-1zM469,166h1v1h-1zM489,720h1v1h-1zM489,701h1v1h-1zM489,681h1v1h-1zM489,661h1v1h-1zM489,641h1v1h-1zM489,621h1v1h-1zM489,602h1v1h-1zM489,582h1v1h-1zM489,562h1v1h-1zM489,542h1v1h-1zM489,522h1v1h-1zM489,502h1v1h-1zM489,483h1v1h-1zM489,463h1v1h-1zM489,443h1v1h-1zM489,423h1v1h-1zM489,403h1v1h-1zM489,384h1v1h-1zM489,364h1v1h-1zM489,344h1v1h-1zM489,324h1v1h-1zM489,304h1v1h-1zM489,285h1v1h-1zM489,265h1v1h-1zM489,245h1v1h-1zM489,225h1v1h-1zM489,205h1v1h-1zM489,186h1v1h-1zM489,166h1v1h-1zM509,720h1v1h-1zM509,701h1v1h-1zM509,681h1v1h-1zM509,661h1v1h-1zM509,641h1v1h-1zM509,621h1v1h-1zM509,602h1v1h-1zM509,582h1v1h-1zM509,562h1v1h-1zM509,542h1v1h-1zM509,522h1v1h-1zM509,502h1v1h-1zM509,483h1v1h-1zM509,463h1v1h-1zM509,443h1v1h-1zM509,423h1v1h-1zM509,403h1v1h-1zM509,384h1v1h-1zM509,364h1v1h-1zM509,344h1v1h-1zM509,324h1v1h-1zM509,304h1v1h-1zM509,285h1v1h-1zM509,265h1v1h-1zM509,245h1v1h-1zM509,225h1v1h-1zM509,205h1v1h-1zM509,186h1v1h-1zM509,166h1v1h-1zM529,720h1v1h-1zM529,701h1v1h-1zM529,681h1v1h-1zM529,661h1v1h-1zM529,641h1v1h-1zM529,621h1v1h-1zM529,602h1v1h-1zM529,582h1v1h-1zM529,562h1v1h-1zM529,542h1v1h-1zM529,522h1v1h-1zM529,502h1v1h-1zM529,483h1v1h-1zM529,463h1v1h-1zM529,443h1v1h-1zM529,423h1v1h-1zM529,403h1v1h-1zM529,384h1v1h-1zM529,364h1v1h-1zM529,344h1v1h-1zM529,324h1v1h-1zM529,304h1v1h-1zM529,285h1v1h-1zM529,265h1v1h-1zM529,245h1v1h-1zM529,225h1v1h-1zM529,205h1v1h-1zM529,186h1v1h-1zM529,166h1v1h-1zM548,720h1v1h-1zM548,701h1v1h-1zM548,681h1v1h-1zM548,661h1v1h-1zM548,641h1v1h-1zM548,621h1v1h-1zM548,602h1v1h-1zM548,582h1v1h-1zM548,562h1v1h-1zM548,542h1v1h-1zM548,522h1v1h-1zM548,502h1v1h-1zM548,483h1v1h-1zM548,463h1v1h-1zM548,443h1v1h-1zM548,423h1v1h-1zM548,403h1v1h-1zM548,384h1v1h-1zM548,364h1v1h-1zM548,344h1v1h-1zM548,324h1v1h-1zM548,304h1v1h-1zM548,285h1v1h-1zM548,265h1v1h-1zM548,245h1v1h-1zM548,225h1v1h-1zM548,205h1v1h-1zM548,186h1v1h-1zM548,166h1v1h-1zM568,720h1v1h-1zM568,701h1v1h-1zM568,681h1v1h-1zM568,661h1v1h-1zM568,641h1v1h-1zM568,621h1v1h-1zM568,602h1v1h-1zM568,582h1v1h-1zM568,562h1v1h-1zM568,542h1v1h-1zM568,522h1v1h-1zM568,502h1v1h-1zM568,483h1v1h-1zM568,463h1v1h-1zM568,443h1v1h-1zM568,423h1v1h-1zM568,403h1v1h-1zM568,384h1v1h-1zM568,364h1v1h-1zM568,344h1v1h-1zM568,324h1v1h-1zM568,304h1v1h-1zM568,285h1v1h-1zM568,265h1v1h-1zM568,245h1v1h-1zM568,225h1v1h-1zM568,205h1v1h-1zM568,186h1v1h-1zM568,166h1v1h-1zM588,720h1v1h-1zM588,701h1v1h-1zM588,681h1v1h-1zM588,661h1v1h-1zM588,641h1v1h-1zM588,621h1v1h-1zM588,602h1v1h-1zM588,582h1v1h-1zM588,562h1v1h-1zM588,542h1v1h-1zM588,522h1v1h-1zM588,502h1v1h-1zM588,483h1v1h-1zM588,463h1v1h-1zM588,443h1v1h-1zM588,423h1v1h-1zM588,403h1v1h-1zM588,384h1v1h-1zM588,364h1v1h-1zM588,344h1v1h-1zM588,324h1v1h-1zM588,304h1v1h-1zM588,285h1v1h-1zM588,265h1v1h-1zM588,245h1v1h-1zM588,225h1v1h-1zM588,205h1v1h-1zM588,186h1v1h-1zM588,166h1v1h-1zM608,720h1v1h-1zM608,701h1v1h-1zM608,681h1v1h-1zM608,661h1v1h-1zM608,641h1v1h-1zM608,621h1v1h-1zM608,602h1v1h-1zM608,582h1v1h-1zM608,562h1v1h-1zM608,542h1v1h-1zM608,522h1v1h-1zM608,502h1v1h-1zM608,483h1v1h-1zM608,463h1v1h-1zM608,443h1v1h-1zM608,423h1v1h-1zM608,403h1v1h-1zM608,384h1v1h-1zM608,364h1v1h-1zM608,344h1v1h-1zM608,324h1v1h-1zM608,304h1v1h-1zM608,285h1v1h-1zM608,265h1v1h-1zM608,245h1v1h-1zM608,225h1v1h-1zM608,205h1v1h-1zM608,186h1v1h-1zM608,166h1v1h-1zM628,720h1v1h-1zM628,701h1v1h-1zM628,681h1v1h-1zM628,661h1v1h-1zM628,641h1v1h-1zM628,621h1v1h-1zM628,602h1v1h-1zM628,582h1v1h-1zM628,562h1v1h-1zM628,542h1v1h-1zM628,522h1v1h-1zM628,502h1v1h-1zM628,483h1v1h-1zM628,463h1v1h-1zM628,443h1v1h-1zM628,423h1v1h-1zM628,403h1v1h-1zM628,384h1v1h-1zM628,364h1v1h-1zM628,344h1v1h-1zM628,324h1v1h-1zM628,304h1v1h-1zM628,285h1v1h-1zM628,265h1v1h-1zM628,245h1v1h-1zM628,225h1v1h-1zM628,205h1v1h-1zM628,186h1v1h-1zM628,166h1v1h-1zM647,720h1v1h-1zM647,701h1v1h-1zM647,681h1v1h-1zM647,661h1v1h-1zM647,641h1v1h-1zM647,621h1v1h-1zM647,602h1v1h-1zM647,582h1v1h-1zM647,562h1v1h-1zM647,542h1v1h-1zM647,522h1v1h-1zM647,502h1v1h-1zM647,483h1v1h-1zM647,463h1v1h-1zM647,443h1v1h-1zM647,423h1v1h-1zM647,403h1v1h-1zM647,384h1v1h-1zM647,364h1v1h-1zM647,344h1v1h-1zM647,324h1v1h-1zM647,304h1v1h-1zM647,285h1v1h-1zM647,265h1v1h-1zM647,245h1v1h-1zM647,225h1v1h-1zM647,205h1v1h-1zM647,186h1v1h-1zM647,166h1v1h-1zM667,720h1v1h-1zM667,701h1v1h-1zM667,681h1v1h-1zM667,661h1v1h-1zM667,641h1v1h-1zM667,621h1v1h-1zM667,602h1v1h-1zM667,582h1v1h-1zM667,562h1v1h-1zM667,542h1v1h-1zM667,522h1v1h-1zM667,502h1v1h-1zM667,483h1v1h-1zM667,463h1v1h-1zM667,443h1v1h-1zM667,423h1v1h-1zM667,403h1v1h-1zM667,384h1v1h-1zM667,364h1v1h-1zM667,344h1v1h-1zM667,324h1v1h-1zM667,304h1v1h-1zM667,285h1v1h-1zM667,265h1v1h-1zM667,245h1v1h-1zM667,225h1v1h-1zM667,205h1v1h-1zM667,186h1v1h-1zM667,166h1v1h-1zM687,720h1v1h-1zM687,701h1v1h-1zM687,681h1v1h-1zM687,661h1v1h-1zM687,641h1v1h-1zM687,621h1v1h-1zM687,602h1v1h-1zM687,582h1v1h-1zM687,562h1v1h-1zM687,542h1v1h-1zM687,522h1v1h-1zM687,502h1v1h-1zM687,483h1v1h-1zM687,463h1v1h-1zM687,443h1v1h-1zM687,423h1v1h-1zM687,403h1v1h-1zM687,384h1v1h-1zM687,364h1v1h-1zM687,344h1v1h-1zM687,324h1v1h-1zM687,304h1v1h-1zM687,285h1v1h-1zM687,265h1v1h-1zM687,245h1v1h-1zM687,225h1v1h-1zM687,205h1v1h-1zM687,186h1v1h-1zM687,166h1v1h-1zM707,720h1v1h-1zM707,701h1v1h-1zM707,681h1v1h-1zM707,661h1v1h-1zM707,641h1v1h-1zM707,621h1v1h-1zM707,602h1v1h-1zM707,582h1v1h-1zM707,562h1v1h-1zM707,542h1v1h-1zM707,522h1v1h-1zM707,502h1v1h-1zM707,483h1v1h-1zM707,463h1v1h-1zM707,443h1v1h-1zM707,423h1v1h-1zM707,403h1v1h-1zM707,384h1v1h-1zM707,364h1v1h-1zM707,344h1v1h-1zM707,324h1v1h-1zM707,304h1v1h-1zM707,285h1v1h-1zM707,265h1v1h-1zM707,245h1v1h-1zM707,225h1v1h-1zM707,205h1v1h-1zM707,186h1v1h-1zM707,166h1v1h-1zM727,720h1v1h-1zM727,701h1v1h-1zM727,681h1v1h-1zM727,661h1v1h-1zM727,641h1v1h-1zM727,621h1v1h-1zM727,602h1v1h-1zM727,582h1v1h-1zM727,562h1v1h-1zM727,542h1v1h-1zM727,522h1v1h-1zM727,502h1v1h-1zM727,483h1v1h-1zM727,463h1v1h-1zM727,443h1v1h-1zM727,423h1v1h-1zM727,403h1v1h-1zM727,384h1v1h-1zM727,364h1v1h-1zM727,344h1v1h-1zM727,324h1v1h-1zM727,304h1v1h-1zM727,285h1v1h-1zM727,265h1v1h-1zM727,245h1v1h-1zM727,225h1v1h-1zM727,205h1v1h-1zM727,186h1v1h-1zM727,166h1v1h-1zM746,720h1v1h-1zM746,701h1v1h-1zM746,681h1v1h-1zM746,661h1v1h-1zM746,641h1v1h-1zM746,621h1v1h-1zM746,602h1v1h-1zM746,582h1v1h-1zM746,562h1v1h-1zM746,542h1v1h-1zM746,522h1v1h-1zM746,502h1v1h-1zM746,483h1v1h-1zM746,463h1v1h-1zM746,443h1v1h-1zM746,423h1v1h-1zM746,403h1v1h-1zM746,384h1v1h-1zM746,364h1v1h-1zM746,344h1v1h-1zM746,324h1v1h-1zM746,304h1v1h-1zM746,285h1v1h-1zM746,265h1v1h-1zM746,245h1v1h-1zM746,225h1v1h-1zM746,205h1v1h-1zM746,186h1v1h-1zM746,166h1v1h-1zM766,720h1v1h-1zM766,701h1v1h-1zM766,681h1v1h-1zM766,661h1v1h-1zM766,641h1v1h-1zM766,621h1v1h-1zM766,602h1v1h-1zM766,582h1v1h-1zM766,562h1v1h-1zM766,542h1v1h-1zM766,522h1v1h-1zM766,502h1v1h-1zM766,483h1v1h-1zM766,463h1v1h-1zM766,443h1v1h-1zM766,423h1v1h-1zM766,403h1v1h-1zM766,384h1v1h-1zM766,364h1v1h-1zM766,344h1v1h-1zM766,324h1v1h-1zM766,304h1v1h-1zM766,285h1v1h-1zM766,265h1v1h-1zM766,245h1v1h-1zM766,225h1v1h-1zM766,205h1v1h-1zM766,186h1v1h-1zM766,166h1v1h-1zM786,720h1v1h-1zM786,701h1v1h-1zM786,681h1v1h-1zM786,661h1v1h-1zM786,641h1v1h-1zM786,621h1v1h-1zM786,602h1v1h-1zM786,582h1v1h-1zM786,562h1v1h-1zM786,542h1v1h-1zM786,522h1v1h-1zM786,502h1v1h-1zM786,483h1v1h-1zM786,463h1v1h-1zM786,443h1v1h-1zM786,423h1v1h-1zM786,403h1v1h-1zM786,384h1v1h-1zM786,364h1v1h-1zM786,344h1v1h-1zM786,324h1v1h-1zM786,304h1v1h-1zM786,285h1v1h-1zM786,265h1v1h-1zM786,245h1v1h-1zM786,225h1v1h-1zM786,205h1v1h-1zM786,186h1v1h-1zM786,166h1v1h-1zM806,720h1v1h-1zM806,701h1v1h-1zM806,681h1v1h-1zM806,661h1v1h-1zM806,641h1v1h-1zM806,621h1v1h-1zM806,602h1v1h-1zM806,582h1v1h-1zM806,562h1v1h-1zM806,542h1v1h-1zM806,522h1v1h-1zM806,502h1v1h-1zM806,483h1v1h-1zM806,463h1v1h-1zM806,443h1v1h-1zM806,423h1v1h-1zM806,403h1v1h-1zM806,384h1v1h-1zM806,364h1v1h-1zM806,344h1v1h-1zM806,324h1v1h-1zM806,304h1v1h-1zM806,285h1v1h-1zM806,265h1v1h-1zM806,245h1v1h-1zM806,225h1v1h-1zM806,205h1v1h-1zM806,186h1v1h-1zM806,166h1v1h-1zM826,720h1v1h-1zM826,701h1v1h-1zM826,681h1v1h-1zM826,661h1v1h-1zM826,641h1v1h-1zM826,621h1v1h-1zM826,602h1v1h-1zM826,582h1v1h-1zM826,562h1v1h-1zM826,542h1v1h-1zM826,522h1v1h-1zM826,502h1v1h-1zM826,483h1v1h-1zM826,463h1v1h-1zM826,443h1v1h-1zM826,423h1v1h-1zM826,403h1v1h-1zM826,384h1v1h-1zM826,364h1v1h-1zM826,344h1v1h-1zM826,324h1v1h-1zM826,304h1v1h-1zM826,285h1v1h-1zM826,265h1v1h-1zM826,245h1v1h-1zM826,225h1v1h-1zM826,205h1v1h-1zM826,186h1v1h-1zM826,166h1v1h-1zM845,720h1v1h-1zM845,701h1v1h-1zM845,681h1v1h-1zM845,661h1v1h-1zM845,641h1v1h-1zM845,621h1v1h-1zM845,602h1v1h-1zM845,582h1v1h-1zM845,562h1v1h-1zM845,542h1v1h-1zM845,522h1v1h-1zM845,502h1v1h-1zM845,483h1v1h-1zM845,463h1v1h-1zM845,443h1v1h-1zM845,423h1v1h-1zM845,403h1v1h-1zM845,384h1v1h-1zM845,364h1v1h-1zM845,344h1v1h-1zM845,324h1v1h-1zM845,304h1v1h-1zM845,285h1v1h-1zM845,265h1v1h-1zM845,245h1v1h-1zM845,225h1v1h-1zM845,205h1v1h-1zM845,186h1v1h-1zM845,166h1v1h-1zM865,720h1v1h-1zM865,701h1v1h-1zM865,681h1v1h-1zM865,661h1v1h-1zM865,641h1v1h-1zM865,621h1v1h-1zM865,602h1v1h-1zM865,582h1v1h-1zM865,562h1v1h-1zM865,542h1v1h-1zM865,522h1v1h-1zM865,502h1v1h-1zM865,483h1v1h-1zM865,463h1v1h-1zM865,443h1v1h-1zM865,423h1v1h-1zM865,403h1v1h-1zM865,384h1v1h-1zM865,364h1v1h-1zM865,344h1v1h-1zM865,324h1v1h-1zM865,304h1v1h-1zM865,285h1v1h-1zM865,265h1v1h-1zM865,245h1v1h-1zM865,225h1v1h-1zM865,205h1v1h-1zM865,186h1v1h-1zM865,166h1v1h-1zM885,720h1v1h-1zM885,701h1v1h-1zM885,681h1v1h-1zM885,661h1v1h-1zM885,641h1v1h-1zM885,621h1v1h-1zM885,602h1v1h-1zM885,582h1v1h-1zM885,562h1v1h-1zM885,542h1v1h-1zM885,522h1v1h-1zM885,502h1v1h-1zM885,483h1v1h-1zM885,463h1v1h-1zM885,443h1v1h-1zM885,423h1v1h-1zM885,403h1v1h-1zM885,384h1v1h-1zM885,364h1v1h-1zM885,344h1v1h-1zM885,324h1v1h-1zM885,304h1v1h-1zM885,285h1v1h-1zM885,265h1v1h-1zM885,245h1v1h-1zM885,225h1v1h-1zM885,205h1v1h-1zM885,186h1v1h-1zM885,166h1v1h-1zM905,720h1v1h-1zM905,701h1v1h-1zM905,681h1v1h-1zM905,661h1v1h-1zM905,641h1v1h-1zM905,621h1v1h-1zM905,602h1v1h-1zM905,582h1v1h-1zM905,562h1v1h-1zM905,542h1v1h-1zM905,522h1v1h-1zM905,502h1v1h-1zM905,483h1v1h-1zM905,463h1v1h-1zM905,443h1v1h-1zM905,423h1v1h-1zM905,403h1v1h-1zM905,384h1v1h-1zM905,364h1v1h-1zM905,344h1v1h-1zM905,324h1v1h-1zM905,304h1v1h-1zM905,285h1v1h-1zM905,265h1v1h-1zM905,245h1v1h-1zM905,225h1v1h-1zM905,205h1v1h-1zM905,186h1v1h-1zM905,166h1v1h-1zM925,720h1v1h-1zM925,701h1v1h-1zM925,681h1v1h-1zM925,661h1v1h-1zM925,641h1v1h-1zM925,621h1v1h-1zM925,602h1v1h-1zM925,582h1v1h-1zM925,562h1v1h-1zM925,542h1v1h-1zM925,522h1v1h-1zM925,502h1v1h-1zM925,483h1v1h-1zM925,463h1v1h-1zM925,443h1v1h-1zM925,423h1v1h-1zM925,403h1v1h-1zM925,384h1v1h-1zM925,364h1v1h-1zM925,344h1v1h-1zM925,324h1v1h-1zM925,304h1v1h-1zM925,285h1v1h-1zM925,265h1v1h-1zM925,245h1v1h-1zM925,225h1v1h-1zM925,205h1v1h-1zM925,186h1v1h-1zM925,166h1v1h-1zM945,720h1v1h-1zM945,701h1v1h-1zM945,681h1v1h-1zM945,661h1v1h-1zM945,641h1v1h-1zM945,621h1v1h-1zM945,602h1v1h-1zM945,582h1v1h-1zM945,562h1v1h-1zM945,542h1v1h-1zM945,522h1v1h-1zM945,502h1v1h-1zM945,483h1v1h-1zM945,463h1v1h-1zM945,443h1v1h-1zM945,423h1v1h-1zM945,403h1v1h-1zM945,384h1v1h-1zM945,364h1v1h-1zM945,344h1v1h-1zM945,324h1v1h-1zM945,304h1v1h-1zM945,285h1v1h-1zM945,265h1v1h-1zM945,245h1v1h-1zM945,225h1v1h-1zM945,205h1v1h-1zM945,186h1v1h-1zM945,166h1v1h-1zM964,720h1v1h-1zM964,701h1v1h-1zM964,681h1v1h-1zM964,661h1v1h-1zM964,641h1v1h-1zM964,621h1v1h-1zM964,602h1v1h-1zM964,582h1v1h-1zM964,562h1v1h-1zM964,542h1v1h-1zM964,522h1v1h-1zM964,502h1v1h-1zM964,483h1v1h-1zM964,463h1v1h-1zM964,443h1v1h-1zM964,423h1v1h-1zM964,403h1v1h-1zM964,384h1v1h-1zM964,364h1v1h-1zM964,344h1v1h-1zM964,324h1v1h-1zM964,304h1v1h-1zM964,285h1v1h-1zM964,265h1v1h-1zM964,245h1v1h-1zM964,225h1v1h-1zM964,205h1v1h-1zM964,186h1v1h-1zM964,166h1v1h-1zM984,720h1v1h-1zM984,701h1v1h-1zM984,681h1v1h-1zM984,661h1v1h-1zM984,641h1v1h-1zM984,621h1v1h-1zM984,602h1v1h-1zM984,582h1v1h-1zM984,562h1v1h-1zM984,542h1v1h-1zM984,522h1v1h-1zM984,502h1v1h-1zM984,483h1v1h-1zM984,463h1v1h-1zM984,443h1v1h-1zM984,423h1v1h-1zM984,403h1v1h-1zM984,384h1v1h-1zM984,364h1v1h-1zM984,344h1v1h-1zM984,324h1v1h-1zM984,304h1v1h-1zM984,285h1v1h-1zM984,265h1v1h-1zM984,245h1v1h-1zM984,225h1v1h-1zM984,205h1v1h-1zM984,186h1v1h-1zM984,166h1v1h-1zM1004,720h1v1h-1zM1004,701h1v1h-1zM1004,681h1v1h-1zM1004,661h1v1h-1zM1004,641h1v1h-1zM1004,621h1v1h-1zM1004,602h1v1h-1zM1004,582h1v1h-1zM1004,562h1v1h-1zM1004,542h1v1h-1zM1004,522h1v1h-1zM1004,502h1v1h-1zM1004,483h1v1h-1zM1004,463h1v1h-1zM1004,443h1v1h-1zM1004,423h1v1h-1zM1004,403h1v1h-1zM1004,384h1v1h-1zM1004,364h1v1h-1zM1004,344h1v1h-1zM1004,324h1v1h-1zM1004,304h1v1h-1zM1004,285h1v1h-1zM1004,265h1v1h-1zM1004,245h1v1h-1zM1004,225h1v1h-1zM1004,205h1v1h-1zM1004,186h1v1h-1zM1004,166h1v1h-1zM1024,720h1v1h-1zM1024,701h1v1h-1zM1024,681h1v1h-1zM1024,661h1v1h-1zM1024,641h1v1h-1zM1024,621h1v1h-1zM1024,602h1v1h-1zM1024,582h1v1h-1zM1024,562h1v1h-1zM1024,542h1v1h-1zM1024,522h1v1h-1zM1024,502h1v1h-1zM1024,483h1v1h-1zM1024,463h1v1h-1zM1024,443h1v1h-1zM1024,423h1v1h-1zM1024,403h1v1h-1zM1024,384h1v1h-1zM1024,364h1v1h-1zM1024,344h1v1h-1zM1024,324h1v1h-1zM1024,304h1v1h-1zM1024,285h1v1h-1zM1024,265h1v1h-1zM1024,245h1v1h-1zM1024,225h1v1h-1zM1024,205h1v1h-1zM1024,186h1v1h-1zM1024,166h1v1h-1zM1044,720h1v1h-1zM1044,701h1v1h-1zM1044,681h1v1h-1zM1044,661h1v1h-1zM1044,641h1v1h-1zM1044,621h1v1h-1zM1044,602h1v1h-1zM1044,582h1v1h-1zM1044,562h1v1h-1zM1044,542h1v1h-1zM1044,522h1v1h-1zM1044,502h1v1h-1zM1044,483h1v1h-1zM1044,463h1v1h-1zM1044,443h1v1h-1zM1044,423h1v1h-1zM1044,403h1v1h-1zM1044,384h1v1h-1zM1044,364h1v1h-1zM1044,344h1v1h-1zM1044,324h1v1h-1zM1044,304h1v1h-1zM1044,285h1v1h-1zM1044,265h1v1h-1zM1044,245h1v1h-1zM1044,225h1v1h-1zM1044,205h1v1h-1zM1044,186h1v1h-1zM1044,166h1v1h-1zM1063,720h1v1h-1zM1063,701h1v1h-1zM1063,681h1v1h-1zM1063,661h1v1h-1zM1063,641h1v1h-1zM1063,621h1v1h-1zM1063,602h1v1h-1zM1063,582h1v1h-1zM1063,562h1v1h-1zM1063,542h1v1h-1zM1063,522h1v1h-1zM1063,502h1v1h-1zM1063,483h1v1h-1zM1063,463h1v1h-1zM1063,443h1v1h-1zM1063,423h1v1h-1zM1063,403h1v1h-1zM1063,384h1v1h-1zM1063,364h1v1h-1zM1063,344h1v1h-1zM1063,324h1v1h-1zM1063,304h1v1h-1zM1063,285h1v1h-1zM1063,265h1v1h-1zM1063,245h1v1h-1zM1063,225h1v1h-1zM1063,205h1v1h-1zM1063,186h1v1h-1zM1063,166h1v1h-1zM1083,720h1v1h-1zM1083,701h1v1h-1zM1083,681h1v1h-1zM1083,661h1v1h-1zM1083,641h1v1h-1zM1083,621h1v1h-1zM1083,602h1v1h-1zM1083,582h1v1h-1zM1083,562h1v1h-1zM1083,542h1v1h-1zM1083,522h1v1h-1zM1083,502h1v1h-1zM1083,483h1v1h-1zM1083,463h1v1h-1zM1083,443h1v1h-1zM1083,423h1v1h-1zM1083,403h1v1h-1zM1083,384h1v1h-1zM1083,364h1v1h-1zM1083,344h1v1h-1zM1083,324h1v1h-1zM1083,304h1v1h-1zM1083,285h1v1h-1zM1083,265h1v1h-1zM1083,245h1v1h-1zM1083,225h1v1h-1zM1083,205h1v1h-1zM1083,186h1v1h-1zM1083,166h1v1h-1zM1103,720h1v1h-1zM1103,701h1v1h-1zM1103,681h1v1h-1zM1103,661h1v1h-1zM1103,641h1v1h-1zM1103,621h1v1h-1zM1103,602h1v1h-1zM1103,582h1v1h-1zM1103,562h1v1h-1zM1103,542h1v1h-1zM1103,522h1v1h-1zM1103,502h1v1h-1zM1103,483h1v1h-1zM1103,463h1v1h-1zM1103,443h1v1h-1zM1103,423h1v1h-1zM1103,403h1v1h-1zM1103,384h1v1h-1zM1103,364h1v1h-1zM1103,344h1v1h-1zM1103,324h1v1h-1zM1103,304h1v1h-1zM1103,285h1v1h-1zM1103,265h1v1h-1zM1103,245h1v1h-1zM1103,225h1v1h-1zM1103,205h1v1h-1zM1103,186h1v1h-1zM1103,166h1v1h-1zM1123,720h1v1h-1zM1123,701h1v1h-1zM1123,681h1v1h-1zM1123,661h1v1h-1zM1123,641h1v1h-1zM1123,621h1v1h-1zM1123,602h1v1h-1zM1123,582h1v1h-1zM1123,562h1v1h-1zM1123,542h1v1h-1zM1123,522h1v1h-1zM1123,502h1v1h-1zM1123,483h1v1h-1zM1123,463h1v1h-1zM1123,443h1v1h-1zM1123,423h1v1h-1zM1123,403h1v1h-1zM1123,384h1v1h-1zM1123,364h1v1h-1zM1123,344h1v1h-1zM1123,324h1v1h-1zM1123,304h1v1h-1zM1123,285h1v1h-1zM1123,265h1v1h-1zM1123,245h1v1h-1zM1123,225h1v1h-1zM1123,205h1v1h-1zM1123,186h1v1h-1zM1123,166h1v1h-1z" fill="#444"/>
<rect x="254.5" y="255.5" width="549" height="376" fill="none" stroke="#bdbdbd" stroke-width="1"/>
<circle cx="449.7" cy="344.5" r="18.2" fill="none" stroke="#c8c8c8" stroke-width="0.9"/>
<circle cx="449.7" cy="344.5" r="16.0" fill="none" stroke="#c8c8c8" stroke-width="0.9"/>
<circle cx="449.7" cy="344.5" r="9.8" fill="none" stroke="#c8c8c8" stroke-width="1" stroke-dasharray="3 1.2"/>
<circle cx="449.7" cy="344.5" r="8.2" fill="none" stroke="#c8c8c8" stroke-width="0.9"/>
<line x1="441.7" y1="332" x2="441.7" y2="339.5" stroke="#c8c8c8" stroke-width="0.8"/>
<line x1="441.7" y1="349.5" x2="441.7" y2="357" stroke="#c8c8c8" stroke-width="0.8"/>
<line x1="457.8" y1="332" x2="457.8" y2="339.5" stroke="#c8c8c8" stroke-width="0.8"/>
<line x1="457.8" y1="349.5" x2="457.8" y2="357" stroke="#c8c8c8" stroke-width="0.8"/>
<line x1="449.7" y1="322" x2="449.7" y2="367" stroke="#b81a1a" stroke-width="1" stroke-dasharray="4.2 1.6 0.7 1.6"/>
<line x1="427.5" y1="344.5" x2="472.5" y2="344.5" stroke="#b81a1a" stroke-width="1" stroke-dasharray="4.2 1.6 0.7 1.6"/>
<path d="M531,326.5L564.5,326.5L564.5,362.5L531,362.5" fill="none" stroke="#c8c8c8" stroke-width="1"/>
<line x1="529" y1="328.5" x2="529" y2="360.5" stroke="#c8c8c8" stroke-width="0.9"/>
<path d="M529,328.5 Q529,326.5 531,326.5 M529,360.5 Q529,362.5 531,362.5" fill="none" stroke="#c8c8c8" stroke-width="0.9"/>
<path d="M564.5,334.5L586.5,334.5L586.5,354.5L564.5,354.5" fill="none" stroke="#c8c8c8" stroke-width="1"/>
<path d="M586.5,335.2L606.4,335.2" fill="none" stroke="#c8c8c8" stroke-width="1"/>
<path d="M586.5,353.8L606.4,353.8" fill="none" stroke="#c8c8c8" stroke-width="1"/>
<path d="M606.4,334.5L626.4,334.5L628.4,336.5L628.4,352.5L626.4,354.5L606.4,354.5L606.4,334.5" fill="none" stroke="#c8c8c8" stroke-width="1"/>
<line x1="626.4" y1="334.5" x2="626.4" y2="354.5" stroke="#c8c8c8" stroke-width="0.8"/>
<line x1="538.9" y1="328" x2="538.9" y2="361" stroke="#c8c8c8" stroke-width="1" stroke-dasharray="2.6 1.4"/>
<line x1="554.5" y1="328" x2="554.5" y2="361" stroke="#c8c8c8" stroke-width="1" stroke-dasharray="2.6 1.4"/>
<path d="M539,326.5 Q546.7,330 554.5,326.5 M539,362.5 Q546.7,359 554.5,362.5" fill="none" stroke="#c8c8c8" stroke-width="0.9"/>
<path d="M540,326.5 H553.5 M540,362.5 H553.5" stroke="#000" stroke-width="1.2"/>
<path d="M539,326.5 Q546.7,330 554.5,326.5 M539,362.5 Q546.7,359 554.5,362.5" fill="none" stroke="#c8c8c8" stroke-width="0.9"/>
<line x1="528.9" y1="325" x2="528.9" y2="364" stroke="#b81a1a" stroke-width="1"/>
<circle cx="528.9" cy="344.5" r="5" fill="none" stroke="#b81a1a" stroke-width="0.9"/>
<line x1="509" y1="344.5" x2="632.6" y2="344.5" stroke="#b81a1a" stroke-width="1" stroke-dasharray="4.2 1.6 0.7 1.6"/>
<line x1="546.4" y1="322" x2="546.4" y2="367" stroke="#b81a1a" stroke-width="1" stroke-dasharray="4.2 1.6 0.7 1.6"/>
<line x1="538.9" y1="312" x2="538.9" y2="326" stroke="#1f6cab" stroke-width="0.9"/>
<line x1="554.5" y1="312" x2="554.5" y2="326" stroke="#1f6cab" stroke-width="0.9"/>
<line x1="538.9" y1="314.5" x2="554.5" y2="314.5" stroke="#1f6cab" stroke-width="0.9"/>
<path d="M538.9,314.5 l3,-1.2 v2.4z M554.5,314.5 l-3,-1.2 v2.4z" fill="#1f6cab"/>
<text x="546.7" y="312" font-family="Liberation Sans" font-size="6" fill="#1f6cab" text-anchor="middle">ø8</text>
<line x1="546.4" y1="368" x2="546.4" y2="385" stroke="#1f6cab" stroke-width="0.9"/>
<line x1="628.4" y1="345" x2="628.4" y2="385" stroke="#1f6cab" stroke-width="0.9"/>
<line x1="546.4" y1="383.5" x2="628.4" y2="383.5" stroke="#1f6cab" stroke-width="0.9"/>
<path d="M546.4,383.5 l4,-1.3 v2.6z M628.4,383.5 l-4,-1.3 v2.6z" fill="#1f6cab"/>
<text x="587.5" y="381.5" font-family="Liberation Sans" font-size="6.5" fill="#1f6cab" text-anchor="middle">41</text>
<path d="M531,405.3L564.5,405.3L564.5,441.3L531,441.3" fill="none" stroke="#c8c8c8" stroke-width="1"/>
<line x1="529" y1="407.3" x2="529" y2="439.3" stroke="#c8c8c8" stroke-width="0.9"/>
<path d="M529,407.3 Q529,405.3 531,405.3 M529,439.3 Q529,441.3 531,441.3" fill="none" stroke="#c8c8c8" stroke-width="0.9"/>
<path d="M564.5,413.3L586.5,413.3L586.5,433.3L564.5,433.3" fill="none" stroke="#c8c8c8" stroke-width="1"/>
<path d="M586.5,414.0L606.4,414.0" fill="none" stroke="#c8c8c8" stroke-width="1"/>
<path d="M586.5,432.6L606.4,432.6" fill="none" stroke="#c8c8c8" stroke-width="1"/>
<path d="M606.4,413.3L626.4,413.3L628.4,415.3L628.4,431.3L626.4,433.3L606.4,433.3L606.4,413.3" fill="none" stroke="#c8c8c8" stroke-width="1"/>
<line x1="626.4" y1="413.3" x2="626.4" y2="433.3" stroke="#c8c8c8" stroke-width="0.8"/>
<circle cx="546.7" cy="423.3" r="8.1" fill="none" stroke="#c8c8c8" stroke-width="0.9"/>
<line x1="546.7" y1="401.5" x2="546.7" y2="445.5" stroke="#b81a1a" stroke-width="1" stroke-dasharray="4.2 1.6 0.7 1.6"/>
<line x1="525" y1="423.3" x2="632.6" y2="423.3" stroke="#b81a1a" stroke-width="1" stroke-dasharray="4.2 1.6 0.7 1.6"/>
<line x1="517" y1="405.3" x2="528" y2="405.3" stroke="#1f6cab" stroke-width="0.9"/>
<line x1="517" y1="441.3" x2="528" y2="441.3" stroke="#1f6cab" stroke-width="0.9"/>
<line x1="519" y1="405.3" x2="519" y2="441.3" stroke="#1f6cab" stroke-width="0.9"/>
<path d="M519,405.3 l-1.2,3.5 h2.4z M519,441.3 l-1.2,-3.5 h2.4z" fill="#1f6cab"/>
<text transform="translate(517.5,423.3) rotate(-90)" font-family="Liberation Sans" font-size="6" fill="#1f6cab" text-anchor="middle">18</text>
<line x1="528.9" y1="442" x2="528.9" y2="485" stroke="#1f6cab" stroke-width="0.9"/>
<line x1="521" y1="453.5" x2="539" y2="453.5" stroke="#1f6cab" stroke-width="0.9"/>
<text x="532" y="452" font-family="Liberation Sans" font-size="6.5" fill="#1f6cab">1x45°</text>
<line x1="564.7" y1="442" x2="564.7" y2="474" stroke="#1f6cab" stroke-width="0.9"/>
<line x1="586.5" y1="434" x2="586.5" y2="465" stroke="#1f6cab" stroke-width="0.9"/>
<line x1="606.4" y1="434" x2="606.4" y2="455" stroke="#1f6cab" stroke-width="0.9"/>
<line x1="628.4" y1="434" x2="628.4" y2="485" stroke="#1f6cab" stroke-width="0.9"/>
<line x1="606.4" y1="453.3" x2="628.4" y2="453.3" stroke="#1f6cab" stroke-width="0.9"/>
<path d="M606.4,453.3 l4,-1.3 v2.6z M628.4,453.3 l-4,-1.3 v2.6z" fill="#1f6cab"/>
<text x="617.4" y="451.5" font-family="Liberation Sans" font-size="6.5" fill="#1f6cab" text-anchor="middle">11</text>
<line x1="586.5" y1="463.3" x2="628.4" y2="463.3" stroke="#1f6cab" stroke-width="0.9"/>
<path d="M586.5,463.3 l4,-1.3 v2.6z M628.4,463.3 l-4,-1.3 v2.6z" fill="#1f6cab"/>
<text x="607.4" y="461.5" font-family="Liberation Sans" font-size="6.5" fill="#1f6cab" text-anchor="middle">21</text>
<line x1="564.7" y1="473.0" x2="628.4" y2="473.0" stroke="#1f6cab" stroke-width="0.9"/>
<path d="M564.7,473.0 l4,-1.3 v2.6z M628.4,473.0 l-4,-1.3 v2.6z" fill="#1f6cab"/>
<text x="596.5" y="471.2" font-family="Liberation Sans" font-size="6.5" fill="#1f6cab" text-anchor="middle">32</text>
<line x1="528.9" y1="483.0" x2="628.4" y2="483.0" stroke="#1f6cab" stroke-width="0.9"/>
<path d="M528.9,483.0 l4,-1.3 v2.6z M628.4,483.0 l-4,-1.3 v2.6z" fill="#1f6cab"/>
<text x="578.6" y="481.2" font-family="Liberation Sans" font-size="6.5" fill="#1f6cab" text-anchor="middle">50</text>
<line x1="598.6" y1="414" x2="598.6" y2="432.6" stroke="#1f6cab" stroke-width="0.9"/>
<path d="M598.6,414 l-1.2,3.5 h2.4z M598.6,432.6 l-1.2,-3.5 h2.4z" fill="#1f6cab"/>
<text transform="translate(596.5,423.3) rotate(-90)" font-family="Liberation Sans" font-size="6" fill="#1f6cab" text-anchor="middle">ø9</text>
<line x1="629" y1="413.3" x2="660" y2="413.3" stroke="#1f6cab" stroke-width="0.9"/>
<line x1="629" y1="433.3" x2="660" y2="433.3" stroke="#1f6cab" stroke-width="0.9"/>
<line x1="657.6" y1="413.3" x2="657.6" y2="433.3" stroke="#1f6cab" stroke-width="0.9"/>
<path d="M657.6,413.3 l-1.2,3.5 h2.4z M657.6,433.3 l-1.2,-3.5 h2.4z" fill="#1f6cab"/>
<text transform="translate(655.5,423.3) rotate(-90)" font-family="Liberation Sans" font-size="6" fill="#1f6cab" text-anchor="middle">ø10</text>
<line x1="618" y1="443.4" x2="634" y2="443.4" stroke="#1f6cab" stroke-width="0.9"/>
<text x="628" y="441.5" font-family="Liberation Sans" font-size="6.5" fill="#1f6cab">1x45°</text>
<path d="M452.51,413.39 L471.37,402.50 A12.12,7.00 60 0 1 483.50,423.50 L464.64,434.39 A12.12,7.00 60 0 1 452.51,413.39 Z" fill="#000" stroke="none"/>
<path d="M452.51,413.39 L471.37,402.50 A12.12,7.00 60 0 1 483.50,423.50 L464.64,434.39" fill="none" stroke="#c8c8c8" stroke-width="0.9"/>
<path d="M452.51,413.39 L453.71,412.70 A12.12,7.00 60 0 1 465.84,433.70 L464.64,434.39 A12.12,7.00 60 0 1 452.51,413.39 Z" fill="#000" stroke="none"/>
<path d="M452.51,413.39 L453.71,412.70 A12.12,7.00 60 0 1 465.84,433.70 L464.64,434.39 A12.12,7.00 60 0 1 452.51,413.39" fill="none" stroke="#c8c8c8" stroke-width="0.9"/>
<path d="M435.85,424.13 L453.00,414.23 A11.15,6.44 60 0 1 464.15,433.55 L447.00,443.45 A11.15,6.44 60 0 1 435.85,424.13 Z" fill="#000" stroke="none"/>
<path d="M435.85,424.13 L453.00,414.23 A11.15,6.44 60 0 1 464.15,433.55 L447.00,443.45" fill="none" stroke="#c8c8c8" stroke-width="0.9"/>
<path d="M416.50,434.18 L435.36,423.29 A12.12,7.00 60 0 1 447.49,444.29 L428.63,455.18 A12.12,7.00 60 0 1 416.50,434.18 Z" fill="#000" stroke="none"/>
<path d="M416.50,434.18 L435.36,423.29 A12.12,7.00 60 0 1 447.49,444.29 L428.63,455.18" fill="none" stroke="#c8c8c8" stroke-width="0.9"/>
<path d="M380.79,443.60 L411.65,425.78 A21.82,12.60 60 0 1 433.48,463.58 L402.61,481.40 A21.82,12.60 60 0 1 380.79,443.60 Z" fill="#000" stroke="none"/>
<path d="M380.79,443.60 L411.65,425.78 A21.82,12.60 60 0 1 433.48,463.58 L402.61,481.40 A21.82,12.60 60 0 1 380.79,443.60" fill="none" stroke="#c8c8c8" stroke-width="0.9"/>
<ellipse cx="393.41" cy="461.51" rx="19.88" ry="11.48" transform="rotate(60 393.41 461.51)" fill="none" stroke="#c8c8c8" stroke-width="0.9"/>
<ellipse cx="405.8" cy="437.3" rx="9.7" ry="5.7" transform="rotate(-6 405.8 437.3)" fill="none" stroke="#c8c8c8" stroke-width="0.9"/>
<line x1="373.3" y1="473.2" x2="493.6" y2="403.5" stroke="#b81a1a" stroke-width="0.9" stroke-dasharray="4.2 1.6 0.7 1.6"/>
<line x1="405.6" y1="416" x2="405.6" y2="493" stroke="#b81a1a" stroke-width="0.9" stroke-dasharray="4.2 1.6 0.7 1.6"/>
<ellipse cx="887.00" cy="422.30" rx="21.27" ry="12.28" transform="rotate(60 887.00 422.30)" fill="none" stroke="#c8c8c8" stroke-width="0.9"/>
<ellipse cx="888.67" cy="421.34" rx="19.38" ry="11.19" transform="rotate(60 888.67 421.34)" fill="none" stroke="#c8c8c8" stroke-width="0.9"/>
<line x1="876.36" y1="403.88" x2="906.45" y2="386.51" stroke="#c8c8c8" stroke-width="0.9"/>
<line x1="897.64" y1="440.72" x2="927.72" y2="423.35" stroke="#c8c8c8" stroke-width="0.9"/>
<ellipse cx="917.09" cy="404.93" rx="21.27" ry="12.28" transform="rotate(60 917.09 404.93)" fill="none" stroke="#c8c8c8" stroke-width="0.9"/>
<line x1="911.18" y1="394.70" x2="929.56" y2="384.08" stroke="#c8c8c8" stroke-width="0.9"/>
<line x1="922.99" y1="415.16" x2="941.38" y2="404.55" stroke="#c8c8c8" stroke-width="0.9"/>
<ellipse cx="917.09" cy="404.93" rx="11.82" ry="6.82" transform="rotate(60 917.09 404.93)" fill="none" stroke="#c8c8c8" stroke-width="0.9" stroke-dasharray="3 1.5"/>
<ellipse cx="935.47" cy="394.31" rx="11.82" ry="6.82" transform="rotate(60 935.47 394.31)" fill="none" stroke="#c8c8c8" stroke-width="0.9"/>
<line x1="930.03" y1="384.90" x2="946.75" y2="375.25" stroke="#c8c8c8" stroke-width="0.9"/>
<line x1="940.91" y1="403.73" x2="957.62" y2="394.08" stroke="#c8c8c8" stroke-width="0.9"/>
<ellipse cx="952.19" cy="384.67" rx="11.82" ry="6.82" transform="rotate(60 952.19 384.67)" fill="none" stroke="#c8c8c8" stroke-width="0.9"/>
<ellipse cx="953.19" cy="384.09" rx="11.82" ry="6.82" transform="rotate(60 953.19 384.09)" fill="none" stroke="#c8c8c8" stroke-width="0.9"/>
<line x1="946.28" y1="374.43" x2="964.66" y2="363.82" stroke="#c8c8c8" stroke-width="0.9"/>
<line x1="958.09" y1="394.90" x2="976.48" y2="384.28" stroke="#c8c8c8" stroke-width="0.9"/>
<ellipse cx="970.57" cy="374.05" rx="11.82" ry="6.82" transform="rotate(60 970.57 374.05)" fill="none" stroke="#c8c8c8" stroke-width="0.9"/>
<ellipse cx="968.90" cy="375.01" rx="9.93" ry="5.73" transform="rotate(60 968.90 375.01)" fill="none" stroke="#c8c8c8" stroke-width="0.9" stroke-dasharray="2 1.2"/>
<ellipse cx="902.04" cy="393.62" rx="9" ry="5.5" transform="rotate(-30 902.04 393.62)" fill="none" stroke="#c8c8c8" stroke-width="0.9"/>
<ellipse cx="902.04" cy="431.62" rx="9" ry="5.5" transform="rotate(-30 902.04 431.62)" fill="none" stroke="#c8c8c8" stroke-width="0.9" stroke-dasharray="3 1.5"/>
<line x1="894.0" y1="394.6" x2="894.0" y2="432.6" stroke="#c8c8c8" stroke-width="0.9"/>
<line x1="910.0" y1="391.6" x2="910.0" y2="429.6" stroke="#c8c8c8" stroke-width="0.9" stroke-dasharray="3 1.5"/>
<line x1="882.0" y1="425.2" x2="980.6" y2="368.3" stroke="#b81a1a" stroke-width="0.9" stroke-dasharray="4.2 1.6 0.7 1.6"/>
<line x1="866.6" y1="412.2" x2="904.5" y2="434.7" stroke="#b81a1a" stroke-width="0.9" stroke-dasharray="4.2 1.6 0.7 1.6"/>
<line x1="885.5" y1="401" x2="885.5" y2="446" stroke="#b81a1a" stroke-width="0.9" stroke-dasharray="4.2 1.6 0.7 1.6"/>
<path d="M466.5,560.5H803.5M466.5,572.5H803.5M466.5,592.5H803.5M615.5,611.5H803.5M466.5,560.5V631.5M496.5,560.5V572.5M530.5,560.5V592.5M579.5,572.5V592.5M654.5,572.5V592.5M704.5,560.5V592.5M763.5,572.5V592.5M615.5,592.5V631.5M734.5,611.5V631.5M763.5,611.5V631.5" fill="none" stroke="#cfcfcf" stroke-width="1"/>
<text x="470.2" y="568.00" font-family="Liberation Sans" font-size="5" fill="#d0d0d0" textLength="16.8" lengthAdjust="spacingAndGlyphs">Item ref</text>
<text x="499.4" y="568.00" font-family="Liberation Sans" font-size="5" fill="#d0d0d0" textLength="18.8" lengthAdjust="spacingAndGlyphs">Quantity</text>
<text x="533.2" y="568.00" font-family="Liberation Sans" font-size="5" fill="#d0d0d0" textLength="104.5" lengthAdjust="spacingAndGlyphs">Title/Name, destination, material, dimension etc</text>
<text x="708" y="568.00" font-family="Liberation Sans" font-size="5" fill="#d0d0d0" textLength="47.5" lengthAdjust="spacingAndGlyphs">Article No./Reference</text>
<text x="470.2" y="578.80" font-family="Liberation Sans" font-size="5" fill="#d0d0d0" textLength="27.6" lengthAdjust="spacingAndGlyphs">Designed by</text>
<text x="533" y="578.80" font-family="Liberation Sans" font-size="5" fill="#d0d0d0" textLength="26.0" lengthAdjust="spacingAndGlyphs">Checked by</text>
<text x="592" y="578.80" font-family="Liberation Sans" font-size="5" fill="#d0d0d0" textLength="42.0" lengthAdjust="spacingAndGlyphs">Approved by - date</text>
<text x="661" y="578.80" font-family="Liberation Sans" font-size="5" fill="#d0d0d0" textLength="20.0" lengthAdjust="spacingAndGlyphs">Filename</text>
<text x="707.2" y="578.80" font-family="Liberation Sans" font-size="5" fill="#d0d0d0" textLength="10.8" lengthAdjust="spacingAndGlyphs">Date</text>
<text x="767.5" y="578.80" font-family="Liberation Sans" font-size="5" fill="#d0d0d0" textLength="12.4" lengthAdjust="spacingAndGlyphs">Scale</text>
<text x="662.8" y="588.02" font-family="Liberation Sans" font-size="5.6" fill="#d0d0d0" textLength="35.4" lengthAdjust="spacingAndGlyphs">part_05.12.dxf</text>
<text x="716.8" y="588.02" font-family="Liberation Sans" font-size="8.4" fill="#e8e8e8" textLength="40.8" lengthAdjust="spacingAndGlyphs">01/01/2024</text>
<text x="785.5" y="588.02" font-family="Liberation Sans" font-size="8.4" fill="#e8e8e8" textLength="13.0" lengthAdjust="spacingAndGlyphs">1:1</text>
<text x="621" y="607.79" font-family="Liberation Sans" font-size="13.3" fill="#f2f2f2" textLength="55.6" lengthAdjust="spacingAndGlyphs">Part 5.12</text>
<text x="737.8" y="618.80" font-family="Liberation Sans" font-size="5" fill="#d0d0d0" textLength="15.0" lengthAdjust="spacingAndGlyphs">Edition</text>
<text x="769" y="618.80" font-family="Liberation Sans" font-size="5" fill="#d0d0d0" textLength="12.7" lengthAdjust="spacingAndGlyphs">Sheet</text>
<circle cx="496.7" cy="610.6" r="9.4" fill="none" stroke="#f2f2f2" stroke-width="4.2"/>
<path d="M489,611.5 H503.5 M496,610 L500.5,603.5 M498.5,612.5 L502.5,605" stroke="#d0d0d0" stroke-width="0.7" fill="none"/>
<path d="M490,614.5 L496.5,613 L501,604.5" stroke="#b01010" stroke-width="1" fill="none"/>
<path d="M499.5,613.5 L506.5,621" stroke="#e8e8e8" stroke-width="3.6"/>
<text x="518.5" y="614.5" font-family="Liberation Sans" font-size="19.5" fill="#e0e0e0" text-anchor="start" font-weight="normal" textLength="48" lengthAdjust="spacingAndGlyphs">QCAD</text>
<text x="566.5" y="614.5" font-family="Liberation Sans" font-size="19.5" fill="#5668a0" text-anchor="start" textLength="31" lengthAdjust="spacingAndGlyphs">.org</text>
<text x="532" y="622.8" font-family="Liberation Sans" font-size="7.3" fill="#3d4c85" text-anchor="start" textLength="54" lengthAdjust="spacingAndGlyphs">Open Source CAD</text>
<circle cx="806" cy="521.8" r="39.5" fill="url(#ring)"/>
<path d="M806.5,523.5 L806.5,543 L811,538.8 L815.5,549.3 L819,547.8 L814.7,537.6 L820.6,537.6 Z" fill="#fff" stroke="#fff" stroke-width="3.4" stroke-linejoin="round"/>
<path d="M806.5,523.5 L806.5,543 L811,538.8 L815.5,549.3 L819,547.8 L814.7,537.6 L820.6,537.6 Z" fill="#fff" stroke="#000" stroke-width="1.1" stroke-linejoin="round"/>
</g>
</svg><svg class="a" style="left:0;top:0" width="1500" height="844" viewBox="0 0 1500 844">
<defs><linearGradient id="gTitle" x1="0" y1="0" x2="0" y2="1"><stop offset="0" stop-color="#ececec"/><stop offset="1" stop-color="#d9d9d9"/></linearGradient><linearGradient id="gLB" x1="0" y1="0" x2="0" y2="1"><stop offset="0" stop-color="#e6e6e6"/><stop offset="0.5" stop-color="#f2f2f2"/><stop offset="1" stop-color="#f6f6f6"/></linearGradient><g id="eye"><path d="M-7.6,0.6 Q-6,-5.8 0,-5.6 Q6,-5.8 7.6,0.6 Q6,5.6 0,5.6 Q-6,5.6 -7.6,0.6 Z" fill="#000"/><ellipse cx="0" cy="0.8" rx="4.9" ry="3.1" fill="#fff"/><circle cx="0" cy="0.6" r="2.7" fill="#000"/><circle cx="-0.9" cy="-0.4" r="0.7" fill="#fff"/></g><g id="lock"><path d="M2,6.5 V3.5 Q2,-0.5 5,-0.5 Q8,-0.5 8,3.5 V6.5" fill="none" stroke="#c6c6c6" stroke-width="1.6"/><rect x="0.5" y="5.8" width="9" height="7.5" rx="0.8" fill="#c6c6c6"/></g><g id="pen"><path d="M0,12 L1,8.5 L9.5,0 Q10.8,-0.8 11.8,0.2 Q12.6,1.2 11.8,2.3 L3.5,11 Z" fill="#e9a83a" stroke="#8a5a10" stroke-width="0.6"/><path d="M9.5,0 L11.8,2.3 L12.6,1.4 Q12.4,-0.6 10.6,-1 Z" fill="#e23a3a"/><path d="M0,12 L1,8.5 L3.5,11 Z" fill="#5a4020"/></g></defs>
<rect x="1155" y="108" width="299" height="21.5" fill="url(#gTitle)"/>
<rect x="1155" y="129" width="299" height="1.5" fill="#c2c2c2"/>
<circle cx="1164" cy="118.2" r="7" fill="#6b6b6b"/>
<circle cx="1182" cy="118.2" r="7" fill="#6b6b6b"/>
<path d="M1161,115.2 l6,6 M1167,115.2 l-6,6" stroke="#fff" stroke-width="1.8"/>
<rect x="1180.5" y="114.5" width="5" height="4" fill="none" stroke="#fff" stroke-width="1.1"/><rect x="1178.3" y="117" width="5" height="4" fill="#6b6b6b" stroke="#fff" stroke-width="1.1"/>
<text x="1322" y="122.5" font-family="Liberation Sans" font-size="11.8" fill="#222" text-anchor="middle">Elenco dei livelli</text>
<rect x="1155" y="130.5" width="299" height="25.5" fill="url(#gLB)"/>
<rect x="1155" y="155.5" width="299" height="1.5" fill="#b8b8b8"/>
<rect x="1214.5" y="130.5" width="1.6" height="25.5" fill="#b8b8b8"/>
<rect x="1274.5" y="130.5" width="1.6" height="25.5" fill="#b8b8b8"/>
<rect x="1334.5" y="130.5" width="1.6" height="25.5" fill="#b8b8b8"/>
<rect x="1394.5" y="130.5" width="1.6" height="25.5" fill="#b8b8b8"/>
<rect x="1453.5" y="108" width="1.5" height="691" fill="#c8c8c8"/>
<use href="#eye" x="1185" y="142.8"/>
<g opacity="0.38"><use href="#eye" x="1245" y="142.8"/></g>
<path d="M1299.5,141.3 h4.2 v-4.5 h3 v4.5 h4.2 v3 h-4.2 v4.5 h-3 v-4.5 h-4.2 z" fill="#e00" stroke="#700" stroke-width="0.6"/>
<rect x="1358.8" y="141.3" width="12" height="3" fill="#e00" stroke="#700" stroke-width="0.6"/>
<use href="#pen" x="1418.5" y="137"/>
<rect x="1155" y="157" width="298.5" height="642" fill="#fff"/>
<rect x="1155" y="157" width="1" height="642" fill="#d0d0d0"/>
<rect x="1161.5" y="163.5" width="15" height="8" fill="#fff" stroke="#000" stroke-width="1.3"/>
<text x="1183" y="171.7" font-family="Liberation Sans" font-size="13.3" fill="#111">0</text>
<use href="#eye" x="1423" y="167"/>
<use href="#lock" x="1440" y="161"/>
<rect x="1161.5" y="183.5" width="15" height="8" fill="#000" stroke="#000" stroke-width="1.3"/>
<text x="1183" y="191.7" font-family="Liberation Sans" font-size="13.3" fill="#111">Bordo</text>
<use href="#eye" x="1423" y="187"/>
<use href="#lock" x="1440" y="181"/>
<rect x="1161.5" y="203.5" width="15" height="8" fill="#ff0000" stroke="#000" stroke-width="1.3"/>
<text x="1183" y="211.7" font-family="Liberation Sans" font-size="13.3" fill="#111">Centro</text>
<use href="#eye" x="1423" y="207"/>
<use href="#lock" x="1440" y="201"/>
<rect x="1161.5" y="223.5" width="15" height="8" fill="#fff" stroke="#000" stroke-width="1.3"/>
<text x="1183" y="231.7" font-family="Liberation Sans" font-size="13.3" fill="#111">Defpoints</text>
<use href="#eye" x="1423" y="227"/>
<use href="#lock" x="1440" y="221"/>
<rect x="1161.5" y="243.5" width="15" height="8" fill="#000" stroke="#000" stroke-width="1.3"/>
<text x="1183" y="251.7" font-family="Liberation Sans" font-size="13.3" fill="#111">Invisibile</text>
<use href="#eye" x="1423" y="247"/>
<use href="#lock" x="1440" y="241"/>
<rect x="1161.5" y="263.5" width="15" height="8" fill="#0a84ff" stroke="#000" stroke-width="1.3"/>
<text x="1183" y="271.7" font-family="Liberation Sans" font-size="13.3" fill="#111">Quote</text>
<use href="#eye" x="1423" y="267"/>
<use href="#lock" x="1440" y="261"/>
<rect x="1161.5" y="283.5" width="15" height="8" fill="#000" stroke="#000" stroke-width="1.3"/>
<text x="1183" y="291.7" font-family="Liberation Sans" font-size="13.3" fill="#111">Sottile</text>
<use href="#eye" x="1423" y="287"/>
<use href="#lock" x="1440" y="281"/>
<rect x="1161.5" y="303.5" width="15" height="8" fill="#000" stroke="#000" stroke-width="1.3"/>
<text x="1183" y="311.7" font-family="Liberation Sans" font-size="13.3" fill="#111">Titolo</text>
<use href="#eye" x="1423" y="307"/>
<use href="#lock" x="1440" y="301"/>
<rect x="1161.5" y="323.5" width="15" height="8" fill="#000" stroke="#000" stroke-width="1.3"/>
<text x="1183" y="331.7" font-family="Liberation Sans" font-size="13.3" fill="#111">Visibile</text>
<use href="#eye" x="1423" y="327"/>
<use href="#lock" x="1440" y="321"/>
<use href="#pen" x="1395" y="161.5"/>
<rect x="1455" y="108" width="45" height="691" fill="url(#gDock)"/>
<defs><linearGradient id="gDock" x1="0" y1="0" x2="1" y2="0"><stop offset="0" stop-color="#f0f0f0"/><stop offset="0.45" stop-color="#e4e4e4"/><stop offset="1" stop-color="#c4c4c4"/></linearGradient></defs>
<g fill="#a8a8a8"><rect x="1462" y="116" width="2" height="2"/><rect x="1468" y="116" width="2" height="2"/><rect x="1474" y="116" width="2" height="2"/><rect x="1480" y="116" width="2" height="2"/><rect x="1486" y="116" width="2" height="2"/></g>
<path d="M1457,261 H1500" stroke="#777" stroke-width="1" stroke-dasharray="1 2"/>
<path d="M1457,409.5 H1500" stroke="#777" stroke-width="1" stroke-dasharray="1 2"/>
<rect x="1456.5" y="120" width="44" height="43" rx="5" fill="#b5b5b5"/>
<rect x="1456.5" y="417" width="44" height="43" rx="5" fill="#b5b5b5"/>
<rect x="1463" y="127" width="27.5" height="27.5" fill="#fff" stroke="#333" stroke-width="0.8"/>
<rect x="1463" y="127" width="27.5" height="4.5" fill="#000"/>
<rect x="1464.3" y="128.2" width="2.2" height="2.2" fill="#fff"/>
<rect x="1463" y="174" width="27.5" height="27.5" fill="#fff" stroke="#333" stroke-width="0.8"/>
<rect x="1463" y="174" width="27.5" height="4.5" fill="#000"/>
<rect x="1464.3" y="175.2" width="2.2" height="2.2" fill="#fff"/>
<rect x="1463" y="220" width="27.5" height="27.5" fill="#fff" stroke="#333" stroke-width="0.8"/>
<rect x="1463" y="220" width="27.5" height="4.5" fill="#000"/>
<rect x="1464.3" y="221.2" width="2.2" height="2.2" fill="#fff"/>
<rect x="1463" y="276" width="27.5" height="27.5" fill="#fff" stroke="#333" stroke-width="0.8"/>
<rect x="1463" y="276" width="27.5" height="4.5" fill="#000"/>
<rect x="1464.3" y="277.2" width="2.2" height="2.2" fill="#fff"/>
<rect x="1463" y="322" width="27.5" height="27.5" fill="#fff" stroke="#333" stroke-width="0.8"/>
<rect x="1463" y="322" width="27.5" height="4.5" fill="#000"/>
<rect x="1464.3" y="323.2" width="2.2" height="2.2" fill="#fff"/>
<rect x="1463" y="368" width="27.5" height="27.5" fill="#fff" stroke="#333" stroke-width="0.8"/>
<rect x="1463" y="368" width="27.5" height="4.5" fill="#000"/>
<rect x="1464.3" y="369.2" width="2.2" height="2.2" fill="#fff"/>
<rect x="1463" y="424" width="27.5" height="27.5" fill="#fff" stroke="#333" stroke-width="0.8"/>
<rect x="1463" y="424" width="27.5" height="4.5" fill="#000"/>
<rect x="1464.3" y="425.2" width="2.2" height="2.2" fill="#fff"/>
<rect x="1463" y="471" width="27.5" height="27.5" fill="#fff" stroke="#333" stroke-width="0.8"/>
<rect x="1463" y="471" width="27.5" height="4.5" fill="#000"/>
<rect x="1464.3" y="472.2" width="2.2" height="2.2" fill="#fff"/>
<path d="M1471,137 l10,-2 v12 l-10,2 z" fill="#ddd" stroke="#555" stroke-width="0.7"/><path d="M1474,136 l10,-2 v12 l-10,2 z" fill="#eee" stroke="#555" stroke-width="0.7"/><path d="M1477,148 l5,-8 l2,4" fill="none" stroke="#d22" stroke-width="0.8"/>
<rect x="1470" y="184" width="11" height="8" fill="#f5e8b0" stroke="#444" stroke-width="0.8"/><circle cx="1482" cy="193" r="4.5" fill="#f5e8b0" stroke="#444" stroke-width="0.8"/>
<rect x="1468" y="229" width="18" height="13" rx="2" fill="#f2f6fb" stroke="#b8c8e0" stroke-width="0.8"/>
<rect x="1468" y="285" width="3" height="3" fill="#000"/><rect x="1473" y="285" width="13" height="3" fill="#fff" stroke="#333" stroke-width="0.6"/>
<rect x="1468" y="290" width="3" height="3" fill="#000"/><rect x="1473" y="290" width="13" height="3" fill="#fff" stroke="#333" stroke-width="0.6"/>
<rect x="1468" y="295" width="3" height="3" fill="#000"/><rect x="1473" y="295" width="13" height="3" fill="#fff" stroke="#333" stroke-width="0.6"/>
<path d="M1469,331 h16 l-6,7 v9 l-3,-2 v-7 z" fill="#999" stroke="#555" stroke-width="0.6"/>
<path d="M1469,377 l7,4 v6 l-7,4 z" fill="#fff" stroke="#333" stroke-width="0.8"/><rect x="1476" y="380.5" width="9" height="7" fill="#777"/><path d="M1466,384 h22" stroke="#e88" stroke-width="0.5"/>
<path d="M1466,433.0 h10" stroke="#999" stroke-width="0.6"/>
<path d="M1466,435.8 h13" stroke="#999" stroke-width="0.6"/>
<path d="M1466,438.6 h10" stroke="#999" stroke-width="0.6"/>
<path d="M1466,441.4 h13" stroke="#999" stroke-width="0.6"/>
<path d="M1463,448 h27.5" stroke="#333" stroke-width="0.6"/>
<text x="1477" y="451" font-family="Liberation Sans" font-size="3.2" fill="#333">command</text>
<rect x="1469.5" y="479" width="14" height="16" rx="1" fill="#c48426"/><rect x="1471.5" y="481" width="10" height="12.5" fill="#f8f8f8"/><rect x="1473.5" y="477.5" width="6" height="3" fill="#888"/>
</svg></body></html>
